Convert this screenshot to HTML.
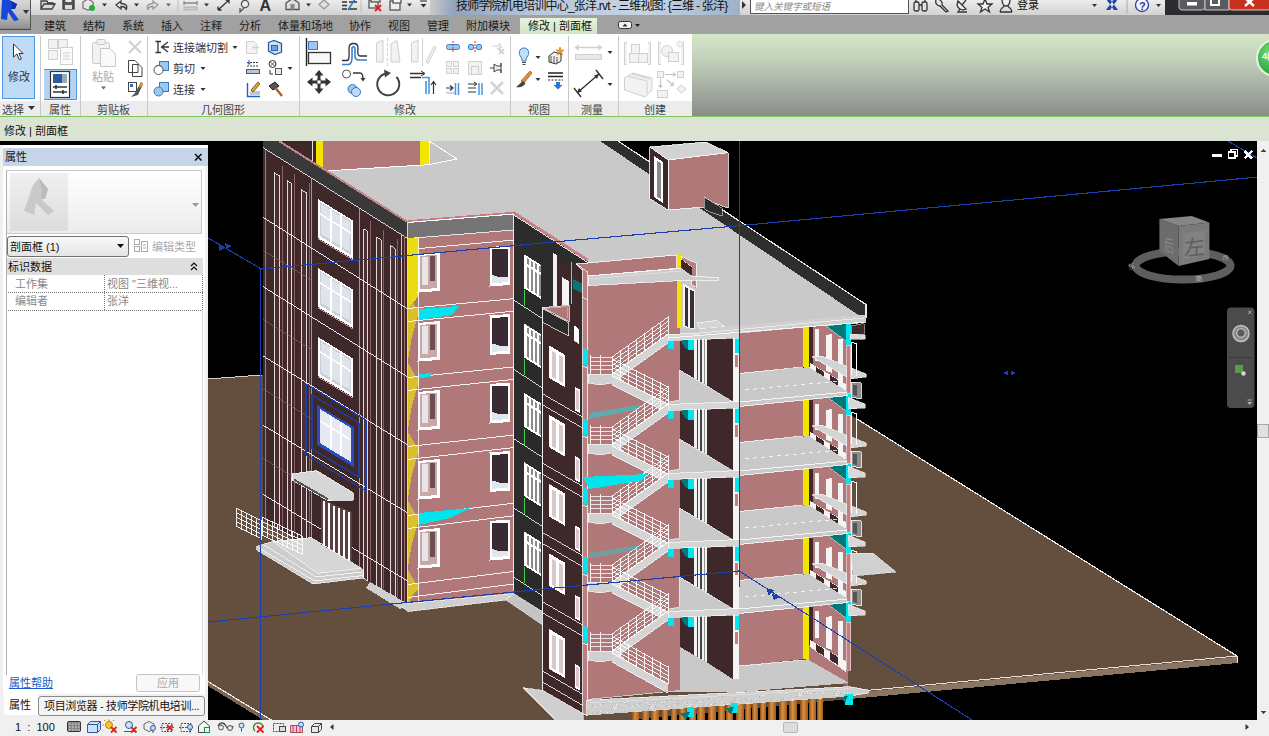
<!DOCTYPE html>
<html lang="zh-CN">
<head>
<meta charset="utf-8">
<title>Revit</title>
<style>
html,body{margin:0;padding:0;}
body{width:1269px;height:736px;overflow:hidden;position:relative;background:#000;font-family:"Liberation Sans","Noto Sans CJK SC",sans-serif;font-size:11px;color:#222;}
.abs{position:absolute;}
#title{left:0;top:0;width:1269px;height:15px;background:linear-gradient(#ececec,#d2d2d2);}
#titletext{left:430px;top:0;width:310px;height:15px;background:linear-gradient(90deg,#c9c9c9 0,#8fa3bd 8%,#b9c8da 35%,#c5d3e3 70%,#9fb2c9 100%);}
#titletext span{position:absolute;left:26px;top:-4px;font-size:12px;color:#111;white-space:nowrap;letter-spacing:-0.8px;}
#tabs{left:0;top:15px;width:1269px;height:18px;background:#a1a1a1;}
.tab{position:absolute;top:18.5px;font-size:11px;color:#1b1b1b;white-space:nowrap;line-height:14px;}
#ribbon{left:0;top:33px;width:1269px;height:84px;background:linear-gradient(#d2e6c8 0,#c3d2bb 30%,#a3aaa0 70%,#8b8d8a 100%);border-top:1px solid #84c35a;border-bottom:1px solid #84c35a;box-sizing:border-box;}
#panels{left:0;top:34px;width:692px;height:82px;background:#fff;}
#plabels{left:0;top:101px;width:692px;height:15px;background:#ececec;}
.plab{position:absolute;top:103px;font-size:11px;color:#444;white-space:nowrap;line-height:14px;}
.psep{position:absolute;top:36px;width:1px;height:80px;background:#c9c9c9;}
.rt{position:absolute;font-size:11px;color:#333;white-space:nowrap;line-height:14px;}
#optbar{left:0;top:117px;width:1269px;height:24px;background:#dbe3d3;}
#optbar span{position:absolute;left:4px;top:5px;font-size:11px;color:#111;}
#view{left:0;top:141px;width:1269px;height:579px;background:#000;overflow:hidden;}
#props{left:0;top:145px;width:208px;height:575px;background:#fff;}
#status{left:0;top:720px;width:1269px;height:16px;background:#f0f0f0;}
</style>
</head>
<body>
<div id="view" class="abs">
<svg id="scene" width="1269" height="579" viewBox="0 141 1269 579" style="position:absolute;left:0;top:0" shape-rendering="crispEdges">
<defs><linearGradient id="pile" x1="0" x2="1" y1="0" y2="0"><stop offset="0" stop-color="#8a4a18"/><stop offset="0.45" stop-color="#d89040"/><stop offset="1" stop-color="#a05a20"/></linearGradient><pattern id="speck" width="37" height="13" patternUnits="userSpaceOnUse"><rect width="37" height="13" fill="#cfcfcf"/><rect x="16" y="11" width="1" height="1" fill="#b8b8b8"/><rect x="33" y="0" width="1" height="1" fill="#efefef"/><rect x="15" y="10" width="1" height="1" fill="#f4f4f4"/><rect x="10" y="1" width="1" height="1" fill="#b8b8b8"/><rect x="30" y="3" width="1" height="1" fill="#efefef"/><rect x="34" y="1" width="1" height="1" fill="#aaa"/><rect x="0" y="11" width="1" height="1" fill="#aaa"/><rect x="26" y="4" width="1" height="1" fill="#aaa"/><rect x="24" y="2" width="1" height="1" fill="#f4f4f4"/><rect x="8" y="9" width="1" height="1" fill="#efefef"/><rect x="8" y="2" width="1" height="1" fill="#f4f4f4"/><rect x="0" y="3" width="1" height="1" fill="#aaa"/><rect x="10" y="2" width="1" height="1" fill="#b8b8b8"/><rect x="20" y="3" width="1" height="1" fill="#aaa"/><rect x="11" y="11" width="1" height="1" fill="#aaa"/><rect x="24" y="4" width="1" height="1" fill="#f4f4f4"/><rect x="23" y="6" width="1" height="1" fill="#aaa"/><rect x="9" y="4" width="1" height="1" fill="#f4f4f4"/><rect x="21" y="4" width="1" height="1" fill="#f4f4f4"/><rect x="21" y="1" width="1" height="1" fill="#b8b8b8"/><rect x="22" y="4" width="1" height="1" fill="#efefef"/><rect x="20" y="2" width="1" height="1" fill="#efefef"/><rect x="30" y="11" width="1" height="1" fill="#aaa"/><rect x="3" y="4" width="1" height="1" fill="#f4f4f4"/><rect x="22" y="6" width="1" height="1" fill="#f4f4f4"/><rect x="35" y="12" width="1" height="1" fill="#efefef"/><rect x="23" y="6" width="1" height="1" fill="#f4f4f4"/><rect x="28" y="0" width="1" height="1" fill="#aaa"/><rect x="12" y="1" width="1" height="1" fill="#aaa"/><rect x="29" y="5" width="1" height="1" fill="#b8b8b8"/><rect x="33" y="4" width="1" height="1" fill="#efefef"/><rect x="6" y="9" width="1" height="1" fill="#b8b8b8"/><rect x="18" y="0" width="1" height="1" fill="#efefef"/><rect x="5" y="3" width="1" height="1" fill="#b8b8b8"/><rect x="32" y="9" width="1" height="1" fill="#b8b8b8"/><rect x="9" y="5" width="1" height="1" fill="#b8b8b8"/><rect x="34" y="1" width="1" height="1" fill="#b8b8b8"/><rect x="20" y="4" width="1" height="1" fill="#aaa"/><rect x="5" y="10" width="1" height="1" fill="#aaa"/><rect x="19" y="7" width="1" height="1" fill="#aaa"/></pattern></defs>
<polygon points="208.0,379.0 731.0,340.0 1237.0,656.0 1237.0,663.0 850.0,699.0 330.0,748.7 273.0,721.0 208.0,681.5" fill="#644f3f"/>
<polyline points="208.0,379.0 262.0,375.0" fill="none" stroke="#d8d0c8" stroke-width="1"/>
<polyline points="857.0,419.0 1237.0,656.0 1237.0,663.0" fill="none" stroke="#f0ebe6" stroke-width="1.2"/>
<polyline points="1237.0,656.0 850.0,692.0" fill="none" stroke="#e8e0d8" stroke-width="1"/>
<polygon points="1237.0,657.0 1237.0,663.0 850.0,699.0 850.0,693.0" fill="#8a7462"/>
<polygon points="208.0,682.0 273.0,721.5 273.0,726.0 208.0,686.0" fill="#7a6452"/>
<polyline points="208.0,681.5 273.0,721.0" fill="none" stroke="#f0ebe6" stroke-width="1.2"/>
<polygon points="279.0,141.0 601.8,141.0 864.0,318.0 864.0,323.0 587.0,347.0 587.5,261.0 513.6,213.6 407.7,222.0" fill="#c9c9c9"/>
<polygon points="600.0,141.0 618.0,141.0 866.0,304.5 866.0,318.0 863.0,318.0" fill="#2e2e2e"/>
<polyline points="618.0,141.0 866.0,304.5 866.0,318.0" fill="none" stroke="#e8e8e8" stroke-width="1.2"/>
<polygon points="279.5,141.0 315.6,141.0 315.6,165.5" fill="#3f2829"/>
<polyline points="312.0,141.0 312.0,163.0" fill="none" stroke="#e8e0e0" stroke-width="1"/>
<polygon points="315.6,141.0 429.0,141.0 429.0,164.7 324.0,171.0" fill="#b07878"/>
<polygon points="315.6,141.0 323.0,141.0 323.0,170.5 315.6,165.5" fill="#f2e500"/>
<polygon points="420.0,141.0 429.0,141.0 429.0,164.7 420.0,165.2" fill="#f2e500"/>
<polygon points="429.0,141.0 457.0,159.0 429.0,164.7" fill="#c4c4c4" stroke="#fff" stroke-width="1"/>
<polyline points="324.0,171.0 429.0,164.7" fill="none" stroke="#fff" stroke-width="1"/>
<polyline points="324.0,171.0 408.0,223.0" fill="none" stroke="#c08a8a" stroke-width="2.5"/>
<polygon points="668.0,160.0 728.0,152.6 728.0,208.0 714.0,203.0 704.0,197.0 704.0,207.0 668.0,210.0" fill="#b07878" stroke="#fff" stroke-width="0.8"/>
<polygon points="649.7,147.0 706.0,142.0 728.0,152.6 668.0,160.0" fill="#d2d2d2" stroke="#fff" stroke-width="0.8"/>
<polygon points="649.7,147.0 668.0,160.0 668.0,210.0 649.7,198.5" fill="#3f2829" stroke="#fff" stroke-width="0.8"/>
<polygon points="654.0,156.0 663.0,162.0 663.0,203.0 654.0,197.0" fill="#fff"/>
<polygon points="656.5,160.0 660.5,163.0 660.5,199.0 656.5,196.0" fill="#8a8a8a"/>
<polygon points="704.0,197.0 722.0,208.0 722.0,216.0 706.4,210.6 704.0,207.0" fill="#2c2c2c" stroke="#ddd" stroke-width="0.6"/>
<polygon points="263.0,147.6 407.7,238.5 407.7,604.0 263.0,520.0" fill="#3f2829"/>
<polygon points="263.0,141.0 279.0,141.0 407.7,222.0 407.7,238.5 263.0,147.6" fill="#393939"/>
<polyline points="279.0,141.0 407.7,222.0" fill="none" stroke="#c4848a" stroke-width="2"/>
<polyline points="263.0,147.6 407.7,238.5" fill="none" stroke="#fff" stroke-width="0.8"/>
<polygon points="274.0,172.5 279.5,176.0 279.5,529.6 274.0,526.4" fill="#4a3032" stroke="#f4ecec" stroke-width="0.9"/>
<polyline points="282.0,166.0 282.0,529.6" fill="none" stroke="#946466" stroke-width="0.9"/>
<polygon points="287.0,180.7 291.7,183.6 291.7,536.7 287.0,533.9" fill="#4a3032" stroke="#f4ecec" stroke-width="0.9"/>
<polyline points="294.2,173.6 294.2,536.7" fill="none" stroke="#946466" stroke-width="0.9"/>
<polygon points="301.2,189.6 306.6,193.0 306.6,545.3 301.2,542.2" fill="#4a3032" stroke="#f4ecec" stroke-width="0.9"/>
<polyline points="309.1,183.0 309.1,545.3" fill="none" stroke="#946466" stroke-width="0.9"/>
<polygon points="363.7,228.9 367.8,231.4 367.8,580.8 363.7,578.5" fill="#4a3032" stroke="#f4ecec" stroke-width="0.9"/>
<polyline points="370.3,221.4 370.3,580.8" fill="none" stroke="#946466" stroke-width="0.9"/>
<polygon points="376.7,237.0 381.4,240.0 381.4,588.7 376.7,586.0" fill="#4a3032" stroke="#f4ecec" stroke-width="0.9"/>
<polyline points="383.9,230.0 383.9,588.7" fill="none" stroke="#946466" stroke-width="0.9"/>
<polygon points="390.3,245.6 395.0,248.5 395.0,596.6 390.3,593.9" fill="#4a3032" stroke="#f4ecec" stroke-width="0.9"/>
<polyline points="397.5,238.5 397.5,596.6" fill="none" stroke="#946466" stroke-width="0.9"/>
<polyline points="265.5,150.0 265.5,521.0" fill="none" stroke="#b07878" stroke-width="1"/>
<polyline points="401.0,234.3 401.0,600.1" fill="none" stroke="#f0e8e8" stroke-width="0.8"/>
<polyline points="404.0,236.2 404.0,601.9" fill="none" stroke="#b07878" stroke-width="0.9"/>
<polyline points="311.0,177.8 311.0,547.9" fill="none" stroke="#d0c4c4" stroke-width="0.7"/>
<polyline points="359.0,207.9 359.0,575.7" fill="none" stroke="#d0c4c4" stroke-width="0.7"/>
<polyline points="263.2,217.4 407.0,308.5" fill="none" stroke="#fff" stroke-width="0.9"/>
<polyline points="263.2,250.4 312.0,280.4" fill="none" stroke="#8a7070" stroke-width="0.6"/>
<polyline points="263.2,286.7 407.0,376.5" fill="none" stroke="#fff" stroke-width="0.9"/>
<polyline points="263.2,319.7 312.0,349.7" fill="none" stroke="#8a7070" stroke-width="0.6"/>
<polyline points="263.2,356.0 407.0,444.5" fill="none" stroke="#fff" stroke-width="0.9"/>
<polyline points="263.2,389.0 312.0,419.0" fill="none" stroke="#8a7070" stroke-width="0.6"/>
<polyline points="263.2,425.3 407.0,512.5" fill="none" stroke="#fff" stroke-width="0.9"/>
<polyline points="263.2,458.3 312.0,488.3" fill="none" stroke="#8a7070" stroke-width="0.6"/>
<polyline points="263.2,494.6 407.0,580.5" fill="none" stroke="#fff" stroke-width="0.9"/>
<polyline points="263.2,527.6 312.0,557.6" fill="none" stroke="#8a7070" stroke-width="0.6"/>
<polygon points="318.0,199.0 353.0,220.5 353.0,259.0 318.0,238.0" fill="#fff"/>
<polygon points="320.0,202.0 351.0,221.0 351.0,255.0 320.0,236.0" fill="#c9cdd6"/>
<polygon points="321.0,204.0 350.0,222.0 350.0,252.0 321.0,234.0" fill="#dfe3ea"/>
<polyline points="331.0,209.0 331.0,243.0" fill="none" stroke="#fff" stroke-width="2"/>
<polyline points="341.0,215.0 341.0,249.0" fill="none" stroke="#fff" stroke-width="2"/>
<polyline points="320.0,214.0 351.0,233.0" fill="none" stroke="#fff" stroke-width="1.6"/>
<polyline points="318.0,239.0 353.0,260.0" fill="none" stroke="#c48c8c" stroke-width="1"/>
<polygon points="318.0,268.0 353.0,289.5 353.0,328.0 318.0,307.0" fill="#fff"/>
<polygon points="320.0,271.0 351.0,290.0 351.0,324.0 320.0,305.0" fill="#c9cdd6"/>
<polygon points="321.0,273.0 350.0,291.0 350.0,321.0 321.0,303.0" fill="#dfe3ea"/>
<polyline points="331.0,278.0 331.0,312.0" fill="none" stroke="#fff" stroke-width="2"/>
<polyline points="341.0,284.0 341.0,318.0" fill="none" stroke="#fff" stroke-width="2"/>
<polyline points="320.0,283.0 351.0,302.0" fill="none" stroke="#fff" stroke-width="1.6"/>
<polyline points="318.0,308.0 353.0,329.0" fill="none" stroke="#c48c8c" stroke-width="1"/>
<polygon points="318.0,337.0 353.0,358.5 353.0,397.0 318.0,376.0" fill="#fff"/>
<polygon points="320.0,340.0 351.0,359.0 351.0,393.0 320.0,374.0" fill="#c9cdd6"/>
<polygon points="321.0,342.0 350.0,360.0 350.0,390.0 321.0,372.0" fill="#dfe3ea"/>
<polyline points="331.0,347.0 331.0,381.0" fill="none" stroke="#fff" stroke-width="2"/>
<polyline points="341.0,353.0 341.0,387.0" fill="none" stroke="#fff" stroke-width="2"/>
<polyline points="320.0,352.0 351.0,371.0" fill="none" stroke="#fff" stroke-width="1.6"/>
<polyline points="318.0,377.0 353.0,398.0" fill="none" stroke="#c48c8c" stroke-width="1"/>
<polygon points="306.0,384.0 366.0,420.0 366.0,491.0 306.0,455.0" fill="none" stroke="#1c3fb0" stroke-width="1.2"/>
<polygon points="312.0,395.0 359.0,423.0 359.0,477.0 312.0,449.0" fill="none" stroke="#1c3fb0" stroke-width="1.2"/>
<polygon points="317.0,405.0 354.0,427.0 354.0,467.0 317.0,445.0" fill="#2a4cc0"/>
<polygon points="320.0,409.0 351.0,428.0 351.0,462.0 320.0,443.0" fill="#e6e9f2"/>
<polyline points="331.0,416.0 331.0,450.0" fill="none" stroke="#fff" stroke-width="2"/>
<polyline points="341.0,422.0 341.0,456.0" fill="none" stroke="#fff" stroke-width="2"/>
<polyline points="320.0,421.0 351.0,440.0" fill="none" stroke="#fff" stroke-width="1.6"/>
<polygon points="407.7,238.5 513.6,230.0 513.6,594.0 407.7,604.0" fill="#b07878"/>
<polygon points="407.7,222.0 513.6,213.6 513.6,230.0 407.7,238.5" fill="#757575"/>
<polyline points="407.7,221.0 513.6,212.6" fill="none" stroke="#c87880" stroke-width="1.5"/>
<polyline points="407.7,222.5 513.6,214.1" fill="none" stroke="#fff" stroke-width="1"/>
<polyline points="407.7,238.5 513.6,230.0" fill="none" stroke="#fff" stroke-width="0.8"/>
<polyline points="407.7,222.0 407.7,604.0" fill="none" stroke="#fff" stroke-width="0.8"/>
<polyline points="513.6,213.6 513.6,594.0" fill="none" stroke="#fff" stroke-width="0.8"/>
<polygon points="408.4,238.5 418.5,237.7 418.5,603.0 408.4,604.0" fill="#b07878"/>
<polygon points="408.4,238.5 418.5,237.7 418.5,296.0 408.4,308.0" fill="#ecdc10"/>
<polygon points="408.4,308.5 418.5,307.7 418.5,313.5 412.0,336.4 408.4,358.1" fill="#e6d21c" opacity="0.8"/>
<polygon points="408.4,294.5 416.0,307.5 408.4,308.5" fill="#e6d21c" opacity="0.7"/>
<polygon points="408.4,377.5 418.5,376.7 418.5,382.5 412.0,405.4 408.4,427.1" fill="#e6d21c" opacity="0.8"/>
<polygon points="408.4,363.5 416.0,376.5 408.4,377.5" fill="#e6d21c" opacity="0.7"/>
<polygon points="408.4,446.5 418.5,445.7 418.5,451.5 412.0,474.4 408.4,496.1" fill="#e6d21c" opacity="0.8"/>
<polygon points="408.4,432.5 416.0,445.5 408.4,446.5" fill="#e6d21c" opacity="0.7"/>
<polygon points="408.4,515.5 418.5,514.7 418.5,520.5 412.0,543.4 408.4,565.1" fill="#e6d21c" opacity="0.8"/>
<polygon points="408.4,501.5 416.0,514.5 408.4,515.5" fill="#e6d21c" opacity="0.7"/>
<polygon points="408.4,584.5 418.5,583.7 418.5,589.5 412.0,595.8 408.4,604.5" fill="#e6d21c" opacity="0.8"/>
<polygon points="408.4,570.5 416.0,583.5 408.4,584.5" fill="#e6d21c" opacity="0.7"/>
<polyline points="418.5,237.7 418.5,603.0" fill="none" stroke="#fff" stroke-width="0.8"/>
<polyline points="407.7,308.5 513.6,298.7" fill="none" stroke="#fff" stroke-width="0.9"/>
<polyline points="407.7,321.5 513.6,311.2" fill="none" stroke="#fff" stroke-width="0.9"/>
<polyline points="407.7,377.5 513.6,366.9" fill="none" stroke="#fff" stroke-width="0.9"/>
<polyline points="407.7,390.5 513.6,379.4" fill="none" stroke="#fff" stroke-width="0.9"/>
<polyline points="407.7,446.5 513.6,435.1" fill="none" stroke="#fff" stroke-width="0.9"/>
<polyline points="407.7,459.5 513.6,447.6" fill="none" stroke="#fff" stroke-width="0.9"/>
<polyline points="407.7,515.5 513.6,503.3" fill="none" stroke="#fff" stroke-width="0.9"/>
<polyline points="407.7,528.5 513.6,515.8" fill="none" stroke="#fff" stroke-width="0.9"/>
<polyline points="407.7,584.5 513.6,571.5" fill="none" stroke="#fff" stroke-width="0.9"/>
<polyline points="407.7,597.5 513.6,584.0" fill="none" stroke="#fff" stroke-width="0.9"/>
<polyline points="418.5,248.5 513.6,240.0" fill="none" stroke="#fff" stroke-width="0.9"/>
<polygon points="419.0,309.0 459.0,306.0 452.0,315.0 419.0,320.0" fill="#00e5ee"/>
<polygon points="419.0,513.0 470.0,508.0 450.0,518.0 419.0,525.0" fill="#00e5ee"/>
<polygon points="419.0,374.0 432.0,373.0 430.0,377.0 419.0,378.0" fill="#00e5ee"/>
<polygon points="417.5,254.0 439.5,252.0 439.5,291.0 417.5,292.5" fill="#fff"/>
<polygon points="420.0,256.0 437.0,254.5 437.0,288.0 420.0,289.5" fill="#c9a8a8"/>
<polygon points="422.0,257.0 428.0,256.5 428.0,285.0 422.0,285.5" fill="#e8e4e8"/>
<polygon points="430.0,256.3 435.0,256.0 435.0,281.0 430.0,281.5" fill="#6a5054"/>
<polygon points="489.5,247.0 510.0,245.5 510.0,285.0 489.5,286.5" fill="#fff"/>
<polygon points="492.0,249.5 507.5,248.5 507.5,281.0 492.0,282.5" fill="#3a2a34"/>
<polygon points="492.0,275.0 499.0,277.0 507.5,277.0 507.5,282.0 492.0,283.5" fill="#dfe6ee"/>
<polygon points="417.5,323.0 439.5,321.0 439.5,360.0 417.5,361.5" fill="#fff"/>
<polygon points="420.0,325.0 437.0,323.5 437.0,357.0 420.0,358.5" fill="#c9a8a8"/>
<polygon points="422.0,326.0 428.0,325.5 428.0,354.0 422.0,354.5" fill="#e8e4e8"/>
<polygon points="430.0,325.3 435.0,325.0 435.0,350.0 430.0,350.5" fill="#6a5054"/>
<polygon points="489.5,315.5 510.0,314.0 510.0,353.5 489.5,355.0" fill="#fff"/>
<polygon points="492.0,318.0 507.5,317.0 507.5,349.5 492.0,351.0" fill="#3a2a34"/>
<polygon points="492.0,343.5 499.0,345.5 507.5,345.5 507.5,350.5 492.0,352.0" fill="#dfe6ee"/>
<polygon points="417.5,392.0 439.5,390.0 439.5,429.0 417.5,430.5" fill="#fff"/>
<polygon points="420.0,394.0 437.0,392.5 437.0,426.0 420.0,427.5" fill="#c9a8a8"/>
<polygon points="422.0,395.0 428.0,394.5 428.0,423.0 422.0,423.5" fill="#e8e4e8"/>
<polygon points="430.0,394.3 435.0,394.0 435.0,419.0 430.0,419.5" fill="#6a5054"/>
<polygon points="489.5,384.0 510.0,382.5 510.0,422.0 489.5,423.5" fill="#fff"/>
<polygon points="492.0,386.5 507.5,385.5 507.5,418.0 492.0,419.5" fill="#3a2a34"/>
<polygon points="492.0,412.0 499.0,414.0 507.5,414.0 507.5,419.0 492.0,420.5" fill="#dfe6ee"/>
<polygon points="417.5,461.0 439.5,459.0 439.5,498.0 417.5,499.5" fill="#fff"/>
<polygon points="420.0,463.0 437.0,461.5 437.0,495.0 420.0,496.5" fill="#c9a8a8"/>
<polygon points="422.0,464.0 428.0,463.5 428.0,492.0 422.0,492.5" fill="#e8e4e8"/>
<polygon points="430.0,463.3 435.0,463.0 435.0,488.0 430.0,488.5" fill="#6a5054"/>
<polygon points="489.5,452.5 510.0,451.0 510.0,490.5 489.5,492.0" fill="#fff"/>
<polygon points="492.0,455.0 507.5,454.0 507.5,486.5 492.0,488.0" fill="#3a2a34"/>
<polygon points="492.0,480.5 499.0,482.5 507.5,482.5 507.5,487.5 492.0,489.0" fill="#dfe6ee"/>
<polygon points="417.5,530.0 439.5,528.0 439.5,567.0 417.5,568.5" fill="#fff"/>
<polygon points="420.0,532.0 437.0,530.5 437.0,564.0 420.0,565.5" fill="#c9a8a8"/>
<polygon points="422.0,533.0 428.0,532.5 428.0,561.0 422.0,561.5" fill="#e8e4e8"/>
<polygon points="430.0,532.3 435.0,532.0 435.0,557.0 430.0,557.5" fill="#6a5054"/>
<polygon points="489.5,521.0 510.0,519.5 510.0,559.0 489.5,560.5" fill="#fff"/>
<polygon points="492.0,523.5 507.5,522.5 507.5,555.0 492.0,556.5" fill="#3a2a34"/>
<polygon points="492.0,549.0 499.0,551.0 507.5,551.0 507.5,556.0 492.0,557.5" fill="#dfe6ee"/>
<polygon points="513.6,213.6 587.5,261.0 587.5,320.0 541.5,320.0 541.5,611.6 513.6,594.0" fill="#2c2c2c"/>
<polyline points="513.6,212.6 587.5,260.0" fill="none" stroke="#c4848a" stroke-width="3"/>
<polyline points="513.6,215.0 587.5,262.4" fill="none" stroke="#fff" stroke-width="0.9"/>
<polygon points="523.6,254.0 541.3,265.0 541.3,299.0 523.6,288.0" fill="#fff"/>
<polygon points="526.5,257.8 528.5,259.0 528.5,264.8 526.5,263.6" fill="#8a8a8a"/>
<polygon points="526.5,266.3 528.5,267.5 528.5,288.8 526.5,287.6" fill="#8a8a8a"/>
<polygon points="530.5,260.3 532.5,261.5 532.5,267.3 530.5,266.1" fill="#8a8a8a"/>
<polygon points="530.5,268.8 532.5,270.0 532.5,291.3 530.5,290.1" fill="#8a8a8a"/>
<polygon points="534.5,262.8 536.5,264.0 536.5,269.8 534.5,268.6" fill="#8a8a8a"/>
<polygon points="534.5,271.3 536.5,272.5 536.5,293.8 534.5,292.6" fill="#8a8a8a"/>
<polygon points="538.5,265.2 540.5,266.4 540.5,272.2 538.5,271.0" fill="#8a8a8a"/>
<polygon points="538.5,273.7 540.5,274.9 540.5,296.2 538.5,295.0" fill="#8a8a8a"/>
<polygon points="523.6,289.0 541.3,300.0 541.3,316.0 523.6,305.0" fill="#2a2a2a"/>
<polyline points="524.5,290.0 524.5,306.0" fill="none" stroke="#40d040" stroke-width="1.3"/>
<polyline points="513.6,300.0 541.5,318.0" fill="none" stroke="#fff" stroke-width="0.8"/>
<polygon points="523.6,323.3 541.3,334.3 541.3,368.3 523.6,357.3" fill="#fff"/>
<polygon points="526.5,327.1 528.5,328.3 528.5,334.1 526.5,332.9" fill="#8a8a8a"/>
<polygon points="526.5,335.6 528.5,336.8 528.5,358.1 526.5,356.9" fill="#8a8a8a"/>
<polygon points="530.5,329.6 532.5,330.8 532.5,336.6 530.5,335.4" fill="#8a8a8a"/>
<polygon points="530.5,338.1 532.5,339.3 532.5,360.6 530.5,359.4" fill="#8a8a8a"/>
<polygon points="534.5,332.1 536.5,333.3 536.5,339.1 534.5,337.9" fill="#8a8a8a"/>
<polygon points="534.5,340.6 536.5,341.8 536.5,363.1 534.5,361.9" fill="#8a8a8a"/>
<polygon points="538.5,334.5 540.5,335.7 540.5,341.5 538.5,340.3" fill="#8a8a8a"/>
<polygon points="538.5,343.0 540.5,344.2 540.5,365.5 538.5,364.3" fill="#8a8a8a"/>
<polygon points="523.6,358.3 541.3,369.3 541.3,385.3 523.6,374.3" fill="#2a2a2a"/>
<polyline points="524.5,359.3 524.5,375.3" fill="none" stroke="#40d040" stroke-width="1.3"/>
<polyline points="513.6,369.3 541.5,387.3" fill="none" stroke="#fff" stroke-width="0.8"/>
<polygon points="523.6,392.6 541.3,403.6 541.3,437.6 523.6,426.6" fill="#fff"/>
<polygon points="526.5,396.4 528.5,397.6 528.5,403.4 526.5,402.2" fill="#8a8a8a"/>
<polygon points="526.5,404.9 528.5,406.1 528.5,427.4 526.5,426.2" fill="#8a8a8a"/>
<polygon points="530.5,398.9 532.5,400.1 532.5,405.9 530.5,404.7" fill="#8a8a8a"/>
<polygon points="530.5,407.4 532.5,408.6 532.5,429.9 530.5,428.7" fill="#8a8a8a"/>
<polygon points="534.5,401.4 536.5,402.6 536.5,408.4 534.5,407.2" fill="#8a8a8a"/>
<polygon points="534.5,409.9 536.5,411.1 536.5,432.4 534.5,431.2" fill="#8a8a8a"/>
<polygon points="538.5,403.8 540.5,405.0 540.5,410.8 538.5,409.6" fill="#8a8a8a"/>
<polygon points="538.5,412.3 540.5,413.5 540.5,434.8 538.5,433.6" fill="#8a8a8a"/>
<polygon points="523.6,427.6 541.3,438.6 541.3,454.6 523.6,443.6" fill="#2a2a2a"/>
<polyline points="524.5,428.6 524.5,444.6" fill="none" stroke="#40d040" stroke-width="1.3"/>
<polyline points="513.6,438.6 541.5,456.6" fill="none" stroke="#fff" stroke-width="0.8"/>
<polygon points="523.6,461.9 541.3,472.9 541.3,506.9 523.6,495.9" fill="#fff"/>
<polygon points="526.5,465.7 528.5,466.9 528.5,472.7 526.5,471.5" fill="#8a8a8a"/>
<polygon points="526.5,474.2 528.5,475.4 528.5,496.7 526.5,495.5" fill="#8a8a8a"/>
<polygon points="530.5,468.2 532.5,469.4 532.5,475.2 530.5,474.0" fill="#8a8a8a"/>
<polygon points="530.5,476.7 532.5,477.9 532.5,499.2 530.5,498.0" fill="#8a8a8a"/>
<polygon points="534.5,470.7 536.5,471.9 536.5,477.7 534.5,476.5" fill="#8a8a8a"/>
<polygon points="534.5,479.2 536.5,480.4 536.5,501.7 534.5,500.5" fill="#8a8a8a"/>
<polygon points="538.5,473.1 540.5,474.3 540.5,480.1 538.5,478.9" fill="#8a8a8a"/>
<polygon points="538.5,481.6 540.5,482.8 540.5,504.1 538.5,502.9" fill="#8a8a8a"/>
<polygon points="523.6,496.9 541.3,507.9 541.3,523.9 523.6,512.9" fill="#2a2a2a"/>
<polyline points="524.5,497.9 524.5,513.9" fill="none" stroke="#40d040" stroke-width="1.3"/>
<polyline points="513.6,507.9 541.5,525.9" fill="none" stroke="#fff" stroke-width="0.8"/>
<polygon points="523.6,531.2 541.3,542.2 541.3,576.2 523.6,565.2" fill="#fff"/>
<polygon points="526.5,535.0 528.5,536.2 528.5,542.0 526.5,540.8" fill="#8a8a8a"/>
<polygon points="526.5,543.5 528.5,544.7 528.5,566.0 526.5,564.8" fill="#8a8a8a"/>
<polygon points="530.5,537.5 532.5,538.7 532.5,544.5 530.5,543.3" fill="#8a8a8a"/>
<polygon points="530.5,546.0 532.5,547.2 532.5,568.5 530.5,567.3" fill="#8a8a8a"/>
<polygon points="534.5,540.0 536.5,541.2 536.5,547.0 534.5,545.8" fill="#8a8a8a"/>
<polygon points="534.5,548.5 536.5,549.7 536.5,571.0 534.5,569.8" fill="#8a8a8a"/>
<polygon points="538.5,542.4 540.5,543.6 540.5,549.4 538.5,548.2" fill="#8a8a8a"/>
<polygon points="538.5,550.9 540.5,552.1 540.5,573.4 538.5,572.2" fill="#8a8a8a"/>
<polygon points="523.6,566.2 541.3,577.2 541.3,593.2 523.6,582.2" fill="#2a2a2a"/>
<polyline points="524.5,567.2 524.5,583.2" fill="none" stroke="#40d040" stroke-width="1.3"/>
<polyline points="513.6,577.2 541.5,595.2" fill="none" stroke="#fff" stroke-width="0.8"/>
<polygon points="553.0,253.0 556.5,255.0 556.5,306.0 553.0,306.5" fill="#f0f0f0"/>
<polygon points="556.5,258.0 570.0,266.5 570.0,305.0 556.5,306.0" fill="#3f2829"/>
<polygon points="562.0,277.0 568.5,281.0 568.5,305.0 562.0,305.5" fill="#f4f4f4"/>
<polyline points="571.0,262.0 571.0,304.0" fill="none" stroke="#c8c060" stroke-width="1"/>
<polygon points="542.5,307.3 569.2,305.4 583.0,318.0 583.0,713.0 542.5,690.0" fill="#3f2829"/>
<polygon points="542.2,308.6 568.8,322.7 568.8,336.0 542.2,322.2" fill="#2c2c2c" stroke="#fff" stroke-width="0.7"/>
<polygon points="542.2,307.5 569.2,305.4 569.2,321.7" fill="#b07878" stroke="#fff" stroke-width="0.7"/>
<polyline points="545.0,308.3 567.0,306.6 567.0,318.0" fill="none" stroke="#d8a8a8" stroke-width="0.8"/>
<polyline points="542.5,307.3 542.5,690.0" fill="none" stroke="#fff" stroke-width="0.9"/>
<polygon points="549.0,345.4 565.2,355.0 565.2,387.4 549.0,377.9" fill="#fff"/>
<polygon points="551.5,350.4 556.0,353.1 556.0,379.4 551.5,376.7" fill="#d8c8cc"/>
<polygon points="558.5,354.4 563.0,357.1 563.0,383.4 558.5,380.7" fill="#d8c8cc"/>
<polyline points="542.5,394.4 583.0,417.9" fill="none" stroke="#fff" stroke-width="0.8"/>
<polyline points="542.5,405.4 583.0,428.9" fill="none" stroke="#fff" stroke-width="0.8"/>
<polygon points="574.5,386.4 580.0,389.7 580.0,413.4 574.5,410.1" fill="#fff"/>
<polygon points="576.0,389.4 578.5,390.9 578.5,410.4 576.0,408.9" fill="#d8c8cc"/>
<polygon points="549.0,414.7 565.2,424.3 565.2,456.7 549.0,447.2" fill="#fff"/>
<polygon points="551.5,419.7 556.0,422.4 556.0,448.7 551.5,446.0" fill="#d8c8cc"/>
<polygon points="558.5,423.7 563.0,426.4 563.0,452.7 558.5,450.0" fill="#d8c8cc"/>
<polyline points="542.5,463.7 583.0,487.2" fill="none" stroke="#fff" stroke-width="0.8"/>
<polyline points="542.5,474.7 583.0,498.2" fill="none" stroke="#fff" stroke-width="0.8"/>
<polygon points="574.5,455.7 580.0,459.0 580.0,482.7 574.5,479.4" fill="#fff"/>
<polygon points="576.0,458.7 578.5,460.2 578.5,479.7 576.0,478.2" fill="#d8c8cc"/>
<polygon points="549.0,484.0 565.2,493.6 565.2,526.0 549.0,516.5" fill="#fff"/>
<polygon points="551.5,489.0 556.0,491.7 556.0,518.0 551.5,515.3" fill="#d8c8cc"/>
<polygon points="558.5,493.0 563.0,495.7 563.0,522.0 558.5,519.3" fill="#d8c8cc"/>
<polyline points="542.5,533.0 583.0,556.5" fill="none" stroke="#fff" stroke-width="0.8"/>
<polyline points="542.5,544.0 583.0,567.5" fill="none" stroke="#fff" stroke-width="0.8"/>
<polygon points="574.5,525.0 580.0,528.3 580.0,552.0 574.5,548.7" fill="#fff"/>
<polygon points="576.0,528.0 578.5,529.5 578.5,549.0 576.0,547.5" fill="#d8c8cc"/>
<polygon points="549.0,553.3 565.2,562.9 565.2,595.3 549.0,585.8" fill="#fff"/>
<polygon points="551.5,558.3 556.0,561.0 556.0,587.3 551.5,584.6" fill="#d8c8cc"/>
<polygon points="558.5,562.3 563.0,565.0 563.0,591.3 558.5,588.6" fill="#d8c8cc"/>
<polyline points="542.5,602.3 583.0,625.8" fill="none" stroke="#fff" stroke-width="0.8"/>
<polyline points="542.5,613.3 583.0,636.8" fill="none" stroke="#fff" stroke-width="0.8"/>
<polygon points="574.5,594.3 580.0,597.6 580.0,621.3 574.5,618.0" fill="#fff"/>
<polygon points="576.0,597.3 578.5,598.8 578.5,618.3 576.0,616.8" fill="#d8c8cc"/>
<polygon points="549.0,629.0 565.2,638.5 565.2,678.0 549.0,669.0" fill="#fff"/>
<polygon points="551.5,634.0 556.0,636.7 556.0,670.0 551.5,667.3" fill="#d8c8cc"/>
<polygon points="558.5,638.0 563.0,640.7 563.0,674.0 558.5,671.3" fill="#d8c8cc"/>
<polyline points="542.5,671.6 583.0,695.1" fill="none" stroke="#fff" stroke-width="0.8"/>
<polyline points="542.5,682.6 583.0,706.1" fill="none" stroke="#fff" stroke-width="0.8"/>
<polygon points="574.5,663.6 580.0,666.9 580.0,690.6 574.5,687.3" fill="#fff"/>
<polygon points="576.0,666.6 578.5,668.1 578.5,687.6 576.0,686.1" fill="#d8c8cc"/>
<polyline points="542.5,740.9 583.0,764.4" fill="none" stroke="#fff" stroke-width="0.8"/>
<polyline points="542.5,751.9 583.0,775.4" fill="none" stroke="#fff" stroke-width="0.8"/>
<polygon points="574.0,317.0 579.3,319.6 579.3,344.0 574.0,341.0" fill="#fff"/>
<polygon points="587.0,277.0 680.0,268.0 680.0,690.0 587.0,700.0" fill="#b07878"/>
<polygon points="680.0,268.0 740.0,300.0 740.0,692.0 680.0,690.0" fill="#c9c9c9"/>
<polygon points="582.8,268.0 587.0,266.0 587.0,716.0 582.8,713.0" fill="#b88080" stroke="#fff" stroke-width="0.8"/>
<polygon points="572.7,262.0 576.4,264.0 582.4,268.0 582.4,332.0 572.7,324.0" fill="#3f2829"/>
<polygon points="576.4,264.0 676.6,255.0 676.6,268.4 587.7,276.0" fill="#b07878" stroke="#fff" stroke-width="0.8"/>
<polygon points="576.4,264.0 587.7,272.0 587.7,300.0 582.4,297.0 582.4,268.0" fill="#b88080" stroke="#fff" stroke-width="0.7"/>
<polygon points="681.0,256.4 696.0,263.0 696.0,288.0 691.5,285.0 691.5,267.0 681.0,259.5" fill="#b88080" stroke="#fff" stroke-width="0.7"/>
<polygon points="681.0,259.4 691.5,267.0 691.5,276.0 681.0,268.4" fill="#3f2829"/>
<polygon points="677.0,254.0 681.0,254.3 681.0,327.5 677.0,327.5" fill="#f2e500"/>
<polygon points="588.4,276.0 681.0,268.4 691.5,276.0 718.5,278.0 718.5,280.3 691.5,280.0 588.4,285.6" fill="#cdcdcd" stroke="#fff" stroke-width="0.7"/>
<polyline points="588.4,279.0 681.0,271.0" fill="none" stroke="#e8e8e8" stroke-width="0.6"/>
<polygon points="572.7,279.0 582.4,283.5 582.4,293.0 572.7,288.5" fill="#007a78"/>
<polygon points="680.0,339.0 694.0,338.0 694.0,378.0 680.0,370.0" fill="#3f2829"/>
<polygon points="694.0,338.0 706.5,337.5 706.5,385.0 694.0,378.0" fill="#f2f2f2"/>
<polyline points="697.0,339.0 697.0,380.0" fill="none" stroke="#444" stroke-width="1"/>
<polyline points="701.0,339.0 701.0,382.0" fill="none" stroke="#444" stroke-width="1.2"/>
<polyline points="704.5,339.0 704.5,384.0" fill="none" stroke="#777" stroke-width="0.8"/>
<polygon points="706.5,338.7 732.6,336.6 732.6,402.0 706.5,385.0" fill="#3f2829"/>
<polygon points="732.6,336.6 739.4,336.0 739.4,402.0 732.6,402.0" fill="#f4f4f4"/>
<polygon points="735.0,355.0 738.0,355.0 738.0,367.0 735.0,367.0" fill="#c08080"/>
<polygon points="735.0,337.0 739.0,337.0 739.0,353.0 735.0,353.0" fill="#00e5ee"/>
<polygon points="679.4,370.0 733.6,402.0 740.0,402.0 740.0,406.0 668.0,409.0 668.0,402.0 679.4,400.0" fill="#c9c9c9" stroke="#fff" stroke-width="0.5"/>
<polygon points="668.0,340.0 673.5,339.5 673.5,349.0 668.0,349.0" fill="#00e5ee"/>
<polygon points="679.0,338.0 692.0,337.0 692.0,349.0 686.0,349.0" fill="#007a78"/>
<polygon points="688.0,337.0 694.0,337.0 694.0,350.0 688.0,350.0" fill="#00e5ee"/>
<polygon points="680.0,409.0 694.0,408.0 694.0,447.0 680.0,439.0" fill="#3f2829"/>
<polygon points="694.0,408.0 706.5,407.5 706.5,454.0 694.0,447.0" fill="#f2f2f2"/>
<polyline points="697.0,409.0 697.0,449.0" fill="none" stroke="#444" stroke-width="1"/>
<polyline points="701.0,409.0 701.0,451.0" fill="none" stroke="#444" stroke-width="1.2"/>
<polyline points="704.5,409.0 704.5,453.0" fill="none" stroke="#777" stroke-width="0.8"/>
<polygon points="706.5,408.7 732.6,406.6 732.6,471.0 706.5,454.0" fill="#3f2829"/>
<polygon points="732.6,406.6 739.4,406.0 739.4,471.0 732.6,471.0" fill="#f4f4f4"/>
<polygon points="735.0,425.0 738.0,425.0 738.0,437.0 735.0,437.0" fill="#c08080"/>
<polygon points="735.0,407.0 739.0,407.0 739.0,423.0 735.0,423.0" fill="#00e5ee"/>
<polygon points="679.4,439.0 733.6,471.0 740.0,471.0 740.0,475.0 668.0,478.0 668.0,471.0 679.4,469.0" fill="#c9c9c9" stroke="#fff" stroke-width="0.5"/>
<polygon points="668.0,410.0 673.5,409.5 673.5,419.0 668.0,419.0" fill="#00e5ee"/>
<polygon points="679.0,408.0 692.0,407.0 692.0,419.0 686.0,419.0" fill="#007a78"/>
<polygon points="688.0,407.0 694.0,407.0 694.0,420.0 688.0,420.0" fill="#00e5ee"/>
<polygon points="680.0,478.0 694.0,477.0 694.0,516.0 680.0,508.0" fill="#3f2829"/>
<polygon points="694.0,477.0 706.5,476.5 706.5,523.0 694.0,516.0" fill="#f2f2f2"/>
<polyline points="697.0,478.0 697.0,518.0" fill="none" stroke="#444" stroke-width="1"/>
<polyline points="701.0,478.0 701.0,520.0" fill="none" stroke="#444" stroke-width="1.2"/>
<polyline points="704.5,478.0 704.5,522.0" fill="none" stroke="#777" stroke-width="0.8"/>
<polygon points="706.5,477.7 732.6,475.6 732.6,540.0 706.5,523.0" fill="#3f2829"/>
<polygon points="732.6,475.6 739.4,475.0 739.4,540.0 732.6,540.0" fill="#f4f4f4"/>
<polygon points="735.0,494.0 738.0,494.0 738.0,506.0 735.0,506.0" fill="#c08080"/>
<polygon points="735.0,476.0 739.0,476.0 739.0,492.0 735.0,492.0" fill="#00e5ee"/>
<polygon points="679.4,508.0 733.6,540.0 740.0,540.0 740.0,544.0 668.0,547.0 668.0,540.0 679.4,538.0" fill="#c9c9c9" stroke="#fff" stroke-width="0.5"/>
<polygon points="668.0,479.0 673.5,478.5 673.5,488.0 668.0,488.0" fill="#00e5ee"/>
<polygon points="679.0,477.0 692.0,476.0 692.0,488.0 686.0,488.0" fill="#007a78"/>
<polygon points="688.0,476.0 694.0,476.0 694.0,489.0 688.0,489.0" fill="#00e5ee"/>
<polygon points="680.0,547.0 694.0,546.0 694.0,585.0 680.0,577.0" fill="#3f2829"/>
<polygon points="694.0,546.0 706.5,545.5 706.5,592.0 694.0,585.0" fill="#f2f2f2"/>
<polyline points="697.0,547.0 697.0,587.0" fill="none" stroke="#444" stroke-width="1"/>
<polyline points="701.0,547.0 701.0,589.0" fill="none" stroke="#444" stroke-width="1.2"/>
<polyline points="704.5,547.0 704.5,591.0" fill="none" stroke="#777" stroke-width="0.8"/>
<polygon points="706.5,546.7 732.6,544.6 732.6,609.0 706.5,592.0" fill="#3f2829"/>
<polygon points="732.6,544.6 739.4,544.0 739.4,609.0 732.6,609.0" fill="#f4f4f4"/>
<polygon points="735.0,563.0 738.0,563.0 738.0,575.0 735.0,575.0" fill="#c08080"/>
<polygon points="735.0,545.0 739.0,545.0 739.0,561.0 735.0,561.0" fill="#00e5ee"/>
<polygon points="679.4,577.0 733.6,609.0 740.0,609.0 740.0,613.0 668.0,616.0 668.0,609.0 679.4,607.0" fill="#c9c9c9" stroke="#fff" stroke-width="0.5"/>
<polygon points="668.0,548.0 673.5,547.5 673.5,557.0 668.0,557.0" fill="#00e5ee"/>
<polygon points="679.0,546.0 692.0,545.0 692.0,557.0 686.0,557.0" fill="#007a78"/>
<polygon points="688.0,545.0 694.0,545.0 694.0,558.0 688.0,558.0" fill="#00e5ee"/>
<polygon points="680.0,616.0 694.0,615.0 694.0,655.0 680.0,647.0" fill="#3f2829"/>
<polygon points="694.0,615.0 706.5,614.5 706.5,662.0 694.0,655.0" fill="#f2f2f2"/>
<polyline points="697.0,616.0 697.0,657.0" fill="none" stroke="#444" stroke-width="1"/>
<polyline points="701.0,616.0 701.0,659.0" fill="none" stroke="#444" stroke-width="1.2"/>
<polyline points="704.5,616.0 704.5,661.0" fill="none" stroke="#777" stroke-width="0.8"/>
<polygon points="706.5,615.7 732.6,613.6 732.6,679.0 706.5,662.0" fill="#3f2829"/>
<polygon points="732.6,613.6 739.4,613.0 739.4,679.0 732.6,679.0" fill="#f4f4f4"/>
<polygon points="735.0,632.0 738.0,632.0 738.0,644.0 735.0,644.0" fill="#c08080"/>
<polygon points="735.0,614.0 739.0,614.0 739.0,630.0 735.0,630.0" fill="#00e5ee"/>
<polygon points="668.0,617.0 673.5,616.5 673.5,626.0 668.0,626.0" fill="#00e5ee"/>
<polygon points="679.0,615.0 692.0,614.0 692.0,626.0 686.0,626.0" fill="#007a78"/>
<polygon points="688.0,614.0 694.0,614.0 694.0,627.0 688.0,627.0" fill="#00e5ee"/>
<polygon points="668.0,334.5 740.0,331.5 740.0,338.0 668.0,340.5" fill="#d6d6d6" stroke="#fff" stroke-width="0.6"/>
<polygon points="668.0,404.5 740.0,401.5 740.0,408.0 668.0,410.5" fill="#d6d6d6" stroke="#fff" stroke-width="0.6"/>
<polygon points="668.0,473.5 740.0,470.5 740.0,477.0 668.0,479.5" fill="#d6d6d6" stroke="#fff" stroke-width="0.6"/>
<polygon points="668.0,542.5 740.0,539.5 740.0,546.0 668.0,548.5" fill="#d6d6d6" stroke="#fff" stroke-width="0.6"/>
<polygon points="668.0,611.5 740.0,608.5 740.0,615.0 668.0,617.5" fill="#d6d6d6" stroke="#fff" stroke-width="0.6"/>
<polygon points="682.6,283.4 695.3,290.0 695.3,329.7 682.6,326.7" fill="#f2f2f2"/>
<polygon points="685.0,287.0 688.0,288.5 688.0,327.0 685.0,326.0" fill="#3a3030"/>
<polygon points="690.0,289.5 693.5,291.3 693.5,328.5 690.0,327.5" fill="#3a3030"/>
<polygon points="696.8,323.0 715.5,320.7 724.5,326.7 700.0,329.0" fill="#d4d4d4" stroke="#fff" stroke-width="0.6"/>
<polygon points="668.0,334.0 612.0,374.0 612.0,383.0 668.0,343.0" fill="#d4d4d4"/>
<polyline points="668.0,334.0 612.0,374.0" fill="none" stroke="#fff" stroke-width="1"/>
<polyline points="668.0,343.0 612.0,383.0" fill="none" stroke="#fff" stroke-width="0.8"/>
<polyline points="668.0,329.8 612.0,369.8" fill="none" stroke="#fff" stroke-width="0.9"/>
<polyline points="668.0,325.6 612.0,365.6" fill="none" stroke="#fff" stroke-width="0.9"/>
<polyline points="668.0,321.4 612.0,361.4" fill="none" stroke="#fff" stroke-width="0.9"/>
<polyline points="668.0,317.2 612.0,357.2" fill="none" stroke="#fff" stroke-width="0.9"/>
<polyline points="668.0,334.0 668.0,316.0" fill="none" stroke="#fff" stroke-width="0.9"/>
<polyline points="660.0,339.7 660.0,321.7" fill="none" stroke="#fff" stroke-width="0.9"/>
<polyline points="652.0,345.4 652.0,327.4" fill="none" stroke="#fff" stroke-width="0.9"/>
<polyline points="644.0,351.1 644.0,333.1" fill="none" stroke="#fff" stroke-width="0.9"/>
<polyline points="636.0,356.9 636.0,338.9" fill="none" stroke="#fff" stroke-width="0.9"/>
<polyline points="628.0,362.6 628.0,344.6" fill="none" stroke="#fff" stroke-width="0.9"/>
<polyline points="620.0,368.3 620.0,350.3" fill="none" stroke="#fff" stroke-width="0.9"/>
<polyline points="612.0,374.0 612.0,356.0" fill="none" stroke="#fff" stroke-width="0.9"/>
<polygon points="588.0,374.0 612.0,374.0 624.0,381.0 600.0,385.0 588.0,383.0" fill="#d0d0d0" stroke="#fff" stroke-width="0.6"/>
<polyline points="590.0,369.8 612.0,369.8" fill="none" stroke="#fff" stroke-width="0.8"/>
<polyline points="590.0,365.6 612.0,365.6" fill="none" stroke="#fff" stroke-width="0.8"/>
<polyline points="590.0,361.4 612.0,361.4" fill="none" stroke="#fff" stroke-width="0.8"/>
<polyline points="590.0,357.2 612.0,357.2" fill="none" stroke="#fff" stroke-width="0.8"/>
<polyline points="590.0,374.0 590.0,355.0" fill="none" stroke="#fff" stroke-width="0.9"/>
<polyline points="600.0,374.0 600.0,355.0" fill="none" stroke="#fff" stroke-width="0.9"/>
<polygon points="612.0,376.0 668.0,404.0 668.0,413.0 612.0,385.0" fill="#d4d4d4"/>
<polyline points="612.0,376.0 668.0,404.0" fill="none" stroke="#fff" stroke-width="1"/>
<polyline points="612.0,385.0 668.0,413.0" fill="none" stroke="#fff" stroke-width="0.8"/>
<polyline points="612.0,371.8 668.0,399.8" fill="none" stroke="#fff" stroke-width="0.9"/>
<polyline points="612.0,367.6 668.0,395.6" fill="none" stroke="#fff" stroke-width="0.9"/>
<polyline points="612.0,363.4 668.0,391.4" fill="none" stroke="#fff" stroke-width="0.9"/>
<polyline points="612.0,359.2 668.0,387.2" fill="none" stroke="#fff" stroke-width="0.9"/>
<polyline points="612.0,376.0 612.0,358.0" fill="none" stroke="#fff" stroke-width="0.9"/>
<polyline points="620.0,380.0 620.0,362.0" fill="none" stroke="#fff" stroke-width="0.9"/>
<polyline points="628.0,384.0 628.0,366.0" fill="none" stroke="#fff" stroke-width="0.9"/>
<polyline points="636.0,388.0 636.0,370.0" fill="none" stroke="#fff" stroke-width="0.9"/>
<polyline points="644.0,392.0 644.0,374.0" fill="none" stroke="#fff" stroke-width="0.9"/>
<polyline points="652.0,396.0 652.0,378.0" fill="none" stroke="#fff" stroke-width="0.9"/>
<polyline points="660.0,400.0 660.0,382.0" fill="none" stroke="#fff" stroke-width="0.9"/>
<polyline points="668.0,404.0 668.0,386.0" fill="none" stroke="#fff" stroke-width="0.9"/>
<polygon points="668.0,404.0 612.0,444.0 612.0,453.0 668.0,413.0" fill="#d4d4d4"/>
<polyline points="668.0,404.0 612.0,444.0" fill="none" stroke="#fff" stroke-width="1"/>
<polyline points="668.0,413.0 612.0,453.0" fill="none" stroke="#fff" stroke-width="0.8"/>
<polyline points="668.0,399.8 612.0,439.8" fill="none" stroke="#fff" stroke-width="0.9"/>
<polyline points="668.0,395.6 612.0,435.6" fill="none" stroke="#fff" stroke-width="0.9"/>
<polyline points="668.0,391.4 612.0,431.4" fill="none" stroke="#fff" stroke-width="0.9"/>
<polyline points="668.0,387.2 612.0,427.2" fill="none" stroke="#fff" stroke-width="0.9"/>
<polyline points="668.0,404.0 668.0,386.0" fill="none" stroke="#fff" stroke-width="0.9"/>
<polyline points="660.0,409.7 660.0,391.7" fill="none" stroke="#fff" stroke-width="0.9"/>
<polyline points="652.0,415.4 652.0,397.4" fill="none" stroke="#fff" stroke-width="0.9"/>
<polyline points="644.0,421.1 644.0,403.1" fill="none" stroke="#fff" stroke-width="0.9"/>
<polyline points="636.0,426.9 636.0,408.9" fill="none" stroke="#fff" stroke-width="0.9"/>
<polyline points="628.0,432.6 628.0,414.6" fill="none" stroke="#fff" stroke-width="0.9"/>
<polyline points="620.0,438.3 620.0,420.3" fill="none" stroke="#fff" stroke-width="0.9"/>
<polyline points="612.0,444.0 612.0,426.0" fill="none" stroke="#fff" stroke-width="0.9"/>
<polygon points="588.0,444.0 612.0,444.0 624.0,451.0 600.0,455.0 588.0,453.0" fill="#d0d0d0" stroke="#fff" stroke-width="0.6"/>
<polyline points="590.0,439.8 612.0,439.8" fill="none" stroke="#fff" stroke-width="0.8"/>
<polyline points="590.0,435.6 612.0,435.6" fill="none" stroke="#fff" stroke-width="0.8"/>
<polyline points="590.0,431.4 612.0,431.4" fill="none" stroke="#fff" stroke-width="0.8"/>
<polyline points="590.0,427.2 612.0,427.2" fill="none" stroke="#fff" stroke-width="0.8"/>
<polyline points="590.0,444.0 590.0,425.0" fill="none" stroke="#fff" stroke-width="0.9"/>
<polyline points="600.0,444.0 600.0,425.0" fill="none" stroke="#fff" stroke-width="0.9"/>
<polygon points="612.0,446.0 668.0,474.0 668.0,483.0 612.0,455.0" fill="#d4d4d4"/>
<polyline points="612.0,446.0 668.0,474.0" fill="none" stroke="#fff" stroke-width="1"/>
<polyline points="612.0,455.0 668.0,483.0" fill="none" stroke="#fff" stroke-width="0.8"/>
<polyline points="612.0,441.8 668.0,469.8" fill="none" stroke="#fff" stroke-width="0.9"/>
<polyline points="612.0,437.6 668.0,465.6" fill="none" stroke="#fff" stroke-width="0.9"/>
<polyline points="612.0,433.4 668.0,461.4" fill="none" stroke="#fff" stroke-width="0.9"/>
<polyline points="612.0,429.2 668.0,457.2" fill="none" stroke="#fff" stroke-width="0.9"/>
<polyline points="612.0,446.0 612.0,428.0" fill="none" stroke="#fff" stroke-width="0.9"/>
<polyline points="620.0,450.0 620.0,432.0" fill="none" stroke="#fff" stroke-width="0.9"/>
<polyline points="628.0,454.0 628.0,436.0" fill="none" stroke="#fff" stroke-width="0.9"/>
<polyline points="636.0,458.0 636.0,440.0" fill="none" stroke="#fff" stroke-width="0.9"/>
<polyline points="644.0,462.0 644.0,444.0" fill="none" stroke="#fff" stroke-width="0.9"/>
<polyline points="652.0,466.0 652.0,448.0" fill="none" stroke="#fff" stroke-width="0.9"/>
<polyline points="660.0,470.0 660.0,452.0" fill="none" stroke="#fff" stroke-width="0.9"/>
<polyline points="668.0,474.0 668.0,456.0" fill="none" stroke="#fff" stroke-width="0.9"/>
<polygon points="668.0,473.0 612.0,513.0 612.0,522.0 668.0,482.0" fill="#d4d4d4"/>
<polyline points="668.0,473.0 612.0,513.0" fill="none" stroke="#fff" stroke-width="1"/>
<polyline points="668.0,482.0 612.0,522.0" fill="none" stroke="#fff" stroke-width="0.8"/>
<polyline points="668.0,468.8 612.0,508.8" fill="none" stroke="#fff" stroke-width="0.9"/>
<polyline points="668.0,464.6 612.0,504.6" fill="none" stroke="#fff" stroke-width="0.9"/>
<polyline points="668.0,460.4 612.0,500.4" fill="none" stroke="#fff" stroke-width="0.9"/>
<polyline points="668.0,456.2 612.0,496.2" fill="none" stroke="#fff" stroke-width="0.9"/>
<polyline points="668.0,473.0 668.0,455.0" fill="none" stroke="#fff" stroke-width="0.9"/>
<polyline points="660.0,478.7 660.0,460.7" fill="none" stroke="#fff" stroke-width="0.9"/>
<polyline points="652.0,484.4 652.0,466.4" fill="none" stroke="#fff" stroke-width="0.9"/>
<polyline points="644.0,490.1 644.0,472.1" fill="none" stroke="#fff" stroke-width="0.9"/>
<polyline points="636.0,495.9 636.0,477.9" fill="none" stroke="#fff" stroke-width="0.9"/>
<polyline points="628.0,501.6 628.0,483.6" fill="none" stroke="#fff" stroke-width="0.9"/>
<polyline points="620.0,507.3 620.0,489.3" fill="none" stroke="#fff" stroke-width="0.9"/>
<polyline points="612.0,513.0 612.0,495.0" fill="none" stroke="#fff" stroke-width="0.9"/>
<polygon points="588.0,513.0 612.0,513.0 624.0,520.0 600.0,524.0 588.0,522.0" fill="#d0d0d0" stroke="#fff" stroke-width="0.6"/>
<polyline points="590.0,508.8 612.0,508.8" fill="none" stroke="#fff" stroke-width="0.8"/>
<polyline points="590.0,504.6 612.0,504.6" fill="none" stroke="#fff" stroke-width="0.8"/>
<polyline points="590.0,500.4 612.0,500.4" fill="none" stroke="#fff" stroke-width="0.8"/>
<polyline points="590.0,496.2 612.0,496.2" fill="none" stroke="#fff" stroke-width="0.8"/>
<polyline points="590.0,513.0 590.0,494.0" fill="none" stroke="#fff" stroke-width="0.9"/>
<polyline points="600.0,513.0 600.0,494.0" fill="none" stroke="#fff" stroke-width="0.9"/>
<polygon points="612.0,515.0 668.0,543.0 668.0,552.0 612.0,524.0" fill="#d4d4d4"/>
<polyline points="612.0,515.0 668.0,543.0" fill="none" stroke="#fff" stroke-width="1"/>
<polyline points="612.0,524.0 668.0,552.0" fill="none" stroke="#fff" stroke-width="0.8"/>
<polyline points="612.0,510.8 668.0,538.8" fill="none" stroke="#fff" stroke-width="0.9"/>
<polyline points="612.0,506.6 668.0,534.6" fill="none" stroke="#fff" stroke-width="0.9"/>
<polyline points="612.0,502.4 668.0,530.4" fill="none" stroke="#fff" stroke-width="0.9"/>
<polyline points="612.0,498.2 668.0,526.2" fill="none" stroke="#fff" stroke-width="0.9"/>
<polyline points="612.0,515.0 612.0,497.0" fill="none" stroke="#fff" stroke-width="0.9"/>
<polyline points="620.0,519.0 620.0,501.0" fill="none" stroke="#fff" stroke-width="0.9"/>
<polyline points="628.0,523.0 628.0,505.0" fill="none" stroke="#fff" stroke-width="0.9"/>
<polyline points="636.0,527.0 636.0,509.0" fill="none" stroke="#fff" stroke-width="0.9"/>
<polyline points="644.0,531.0 644.0,513.0" fill="none" stroke="#fff" stroke-width="0.9"/>
<polyline points="652.0,535.0 652.0,517.0" fill="none" stroke="#fff" stroke-width="0.9"/>
<polyline points="660.0,539.0 660.0,521.0" fill="none" stroke="#fff" stroke-width="0.9"/>
<polyline points="668.0,543.0 668.0,525.0" fill="none" stroke="#fff" stroke-width="0.9"/>
<polygon points="668.0,542.0 612.0,582.0 612.0,591.0 668.0,551.0" fill="#d4d4d4"/>
<polyline points="668.0,542.0 612.0,582.0" fill="none" stroke="#fff" stroke-width="1"/>
<polyline points="668.0,551.0 612.0,591.0" fill="none" stroke="#fff" stroke-width="0.8"/>
<polyline points="668.0,537.8 612.0,577.8" fill="none" stroke="#fff" stroke-width="0.9"/>
<polyline points="668.0,533.6 612.0,573.6" fill="none" stroke="#fff" stroke-width="0.9"/>
<polyline points="668.0,529.4 612.0,569.4" fill="none" stroke="#fff" stroke-width="0.9"/>
<polyline points="668.0,525.2 612.0,565.2" fill="none" stroke="#fff" stroke-width="0.9"/>
<polyline points="668.0,542.0 668.0,524.0" fill="none" stroke="#fff" stroke-width="0.9"/>
<polyline points="660.0,547.7 660.0,529.7" fill="none" stroke="#fff" stroke-width="0.9"/>
<polyline points="652.0,553.4 652.0,535.4" fill="none" stroke="#fff" stroke-width="0.9"/>
<polyline points="644.0,559.1 644.0,541.1" fill="none" stroke="#fff" stroke-width="0.9"/>
<polyline points="636.0,564.9 636.0,546.9" fill="none" stroke="#fff" stroke-width="0.9"/>
<polyline points="628.0,570.6 628.0,552.6" fill="none" stroke="#fff" stroke-width="0.9"/>
<polyline points="620.0,576.3 620.0,558.3" fill="none" stroke="#fff" stroke-width="0.9"/>
<polyline points="612.0,582.0 612.0,564.0" fill="none" stroke="#fff" stroke-width="0.9"/>
<polygon points="588.0,582.0 612.0,582.0 624.0,589.0 600.0,593.0 588.0,591.0" fill="#d0d0d0" stroke="#fff" stroke-width="0.6"/>
<polyline points="590.0,577.8 612.0,577.8" fill="none" stroke="#fff" stroke-width="0.8"/>
<polyline points="590.0,573.6 612.0,573.6" fill="none" stroke="#fff" stroke-width="0.8"/>
<polyline points="590.0,569.4 612.0,569.4" fill="none" stroke="#fff" stroke-width="0.8"/>
<polyline points="590.0,565.2 612.0,565.2" fill="none" stroke="#fff" stroke-width="0.8"/>
<polyline points="590.0,582.0 590.0,563.0" fill="none" stroke="#fff" stroke-width="0.9"/>
<polyline points="600.0,582.0 600.0,563.0" fill="none" stroke="#fff" stroke-width="0.9"/>
<polygon points="612.0,584.0 668.0,612.0 668.0,621.0 612.0,593.0" fill="#d4d4d4"/>
<polyline points="612.0,584.0 668.0,612.0" fill="none" stroke="#fff" stroke-width="1"/>
<polyline points="612.0,593.0 668.0,621.0" fill="none" stroke="#fff" stroke-width="0.8"/>
<polyline points="612.0,579.8 668.0,607.8" fill="none" stroke="#fff" stroke-width="0.9"/>
<polyline points="612.0,575.6 668.0,603.6" fill="none" stroke="#fff" stroke-width="0.9"/>
<polyline points="612.0,571.4 668.0,599.4" fill="none" stroke="#fff" stroke-width="0.9"/>
<polyline points="612.0,567.2 668.0,595.2" fill="none" stroke="#fff" stroke-width="0.9"/>
<polyline points="612.0,584.0 612.0,566.0" fill="none" stroke="#fff" stroke-width="0.9"/>
<polyline points="620.0,588.0 620.0,570.0" fill="none" stroke="#fff" stroke-width="0.9"/>
<polyline points="628.0,592.0 628.0,574.0" fill="none" stroke="#fff" stroke-width="0.9"/>
<polyline points="636.0,596.0 636.0,578.0" fill="none" stroke="#fff" stroke-width="0.9"/>
<polyline points="644.0,600.0 644.0,582.0" fill="none" stroke="#fff" stroke-width="0.9"/>
<polyline points="652.0,604.0 652.0,586.0" fill="none" stroke="#fff" stroke-width="0.9"/>
<polyline points="660.0,608.0 660.0,590.0" fill="none" stroke="#fff" stroke-width="0.9"/>
<polyline points="668.0,612.0 668.0,594.0" fill="none" stroke="#fff" stroke-width="0.9"/>
<polygon points="668.0,611.0 612.0,651.0 612.0,660.0 668.0,620.0" fill="#d4d4d4"/>
<polyline points="668.0,611.0 612.0,651.0" fill="none" stroke="#fff" stroke-width="1"/>
<polyline points="668.0,620.0 612.0,660.0" fill="none" stroke="#fff" stroke-width="0.8"/>
<polyline points="668.0,606.8 612.0,646.8" fill="none" stroke="#fff" stroke-width="0.9"/>
<polyline points="668.0,602.6 612.0,642.6" fill="none" stroke="#fff" stroke-width="0.9"/>
<polyline points="668.0,598.4 612.0,638.4" fill="none" stroke="#fff" stroke-width="0.9"/>
<polyline points="668.0,594.2 612.0,634.2" fill="none" stroke="#fff" stroke-width="0.9"/>
<polyline points="668.0,611.0 668.0,593.0" fill="none" stroke="#fff" stroke-width="0.9"/>
<polyline points="660.0,616.7 660.0,598.7" fill="none" stroke="#fff" stroke-width="0.9"/>
<polyline points="652.0,622.4 652.0,604.4" fill="none" stroke="#fff" stroke-width="0.9"/>
<polyline points="644.0,628.1 644.0,610.1" fill="none" stroke="#fff" stroke-width="0.9"/>
<polyline points="636.0,633.9 636.0,615.9" fill="none" stroke="#fff" stroke-width="0.9"/>
<polyline points="628.0,639.6 628.0,621.6" fill="none" stroke="#fff" stroke-width="0.9"/>
<polyline points="620.0,645.3 620.0,627.3" fill="none" stroke="#fff" stroke-width="0.9"/>
<polyline points="612.0,651.0 612.0,633.0" fill="none" stroke="#fff" stroke-width="0.9"/>
<polygon points="588.0,651.0 612.0,651.0 624.0,658.0 600.0,662.0 588.0,660.0" fill="#d0d0d0" stroke="#fff" stroke-width="0.6"/>
<polyline points="590.0,646.8 612.0,646.8" fill="none" stroke="#fff" stroke-width="0.8"/>
<polyline points="590.0,642.6 612.0,642.6" fill="none" stroke="#fff" stroke-width="0.8"/>
<polyline points="590.0,638.4 612.0,638.4" fill="none" stroke="#fff" stroke-width="0.8"/>
<polyline points="590.0,634.2 612.0,634.2" fill="none" stroke="#fff" stroke-width="0.8"/>
<polyline points="590.0,651.0 590.0,632.0" fill="none" stroke="#fff" stroke-width="0.9"/>
<polyline points="600.0,651.0 600.0,632.0" fill="none" stroke="#fff" stroke-width="0.9"/>
<polygon points="612.0,653.0 668.0,684.0 668.0,693.0 612.0,662.0" fill="#d4d4d4"/>
<polyline points="612.0,653.0 668.0,684.0" fill="none" stroke="#fff" stroke-width="1"/>
<polyline points="612.0,662.0 668.0,693.0" fill="none" stroke="#fff" stroke-width="0.8"/>
<polyline points="612.0,648.8 668.0,679.8" fill="none" stroke="#fff" stroke-width="0.9"/>
<polyline points="612.0,644.6 668.0,675.6" fill="none" stroke="#fff" stroke-width="0.9"/>
<polyline points="612.0,640.4 668.0,671.4" fill="none" stroke="#fff" stroke-width="0.9"/>
<polyline points="612.0,636.2 668.0,667.2" fill="none" stroke="#fff" stroke-width="0.9"/>
<polyline points="612.0,653.0 612.0,635.0" fill="none" stroke="#fff" stroke-width="0.9"/>
<polyline points="620.0,657.4 620.0,639.4" fill="none" stroke="#fff" stroke-width="0.9"/>
<polyline points="628.0,661.9 628.0,643.9" fill="none" stroke="#fff" stroke-width="0.9"/>
<polyline points="636.0,666.3 636.0,648.3" fill="none" stroke="#fff" stroke-width="0.9"/>
<polyline points="644.0,670.7 644.0,652.7" fill="none" stroke="#fff" stroke-width="0.9"/>
<polyline points="652.0,675.1 652.0,657.1" fill="none" stroke="#fff" stroke-width="0.9"/>
<polyline points="660.0,679.6 660.0,661.6" fill="none" stroke="#fff" stroke-width="0.9"/>
<polyline points="668.0,684.0 668.0,666.0" fill="none" stroke="#fff" stroke-width="0.9"/>
<polygon points="582.8,348.0 587.5,350.0 587.5,366.0 582.8,364.0" fill="#00e5ee"/>
<polyline points="582.8,366.0 587.0,368.0" fill="none" stroke="#fff" stroke-width="0.8"/>
<polygon points="582.8,418.0 587.5,420.0 587.5,436.0 582.8,434.0" fill="#00e5ee"/>
<polyline points="582.8,436.0 587.0,438.0" fill="none" stroke="#fff" stroke-width="0.8"/>
<polygon points="582.8,487.0 587.5,489.0 587.5,505.0 582.8,503.0" fill="#00e5ee"/>
<polyline points="582.8,505.0 587.0,507.0" fill="none" stroke="#fff" stroke-width="0.8"/>
<polygon points="582.8,556.0 587.5,558.0 587.5,574.0 582.8,572.0" fill="#00e5ee"/>
<polyline points="582.8,574.0 587.0,576.0" fill="none" stroke="#fff" stroke-width="0.8"/>
<polygon points="582.8,625.0 587.5,627.0 587.5,643.0 582.8,641.0" fill="#00e5ee"/>
<polyline points="582.8,643.0 587.0,645.0" fill="none" stroke="#fff" stroke-width="0.8"/>
<polygon points="589.0,413.0 640.0,405.0 636.0,410.0 589.0,419.0" fill="#00e5ee" opacity="0.45"/>
<polygon points="583.0,477.0 648.0,474.0 640.0,481.0 589.0,489.0" fill="#00e5ee"/>
<polygon points="589.0,553.0 640.0,545.0 636.0,550.0 589.0,558.0" fill="#00e5ee" opacity="0.35"/>
<polygon points="739.4,331.0 803.3,324.5 803.3,367.0 739.4,373.5" fill="#b07878"/>
<polygon points="803.3,324.5 808.9,324.0 808.9,368.0 803.3,367.0" fill="#f2e500"/>
<polygon points="808.9,324.0 848.0,320.0 848.0,393.0 808.9,368.0" fill="#b07878"/>
<polygon points="808.9,324.0 813.0,323.6 813.0,371.0 808.9,368.0" fill="#3f2829"/>
<polygon points="815.0,329.0 819.0,328.5 819.0,361.0 815.0,361.0" fill="#f4f4f4"/>
<polygon points="826.0,335.0 832.0,334.0 832.0,373.0 826.0,371.0" fill="#f4f4f4"/>
<polygon points="838.0,339.0 843.0,338.5 843.0,383.0 838.0,381.0" fill="#f4f4f4"/>
<polygon points="810.0,363.0 846.0,384.0 846.0,395.0 810.0,370.0" fill="#f4f4f4"/>
<polygon points="816.0,367.0 824.0,372.0 824.0,379.0 816.0,374.0" fill="#3f2829"/>
<polygon points="830.0,375.0 838.0,380.0 838.0,388.0 830.0,383.0" fill="#3f2829"/>
<polygon points="812.0,357.0 822.0,356.0 866.0,374.0 866.0,377.0 850.0,379.0" fill="#d4d4d4" stroke="#fff" stroke-width="0.6"/>
<polygon points="851.0,382.0 861.0,383.0 861.0,399.0 851.0,397.0" fill="#8c8c8c" stroke="#fff" stroke-width="0.8"/>
<polygon points="853.0,385.0 857.0,385.4 857.0,396.0 853.0,395.0" fill="#555"/>
<polygon points="826.0,326.0 846.0,323.5 846.0,341.0" fill="#007a78" stroke="#fff" stroke-width="0.5"/>
<polygon points="846.0,323.0 850.5,323.0 850.5,345.0 846.0,345.0" fill="#00e5ee"/>
<polygon points="851.0,326.0 864.0,323.5 864.0,334.0 851.0,334.0" fill="#3f2829" stroke="#fff" stroke-width="0.5"/>
<polygon points="850.0,334.0 865.0,335.0 865.0,339.0 850.0,339.0" fill="#d8d8d8" stroke="#fff" stroke-width="0.5"/>
<polyline points="851.5,342.0 851.5,375.0" fill="none" stroke="#fff" stroke-width="1"/>
<polyline points="856.5,344.0 856.5,376.0" fill="none" stroke="#fff" stroke-width="1"/>
<polyline points="851.5,342.0 856.5,344.0" fill="none" stroke="#fff" stroke-width="1"/>
<polygon points="739.4,406.0 803.3,399.5 803.3,436.0 739.4,442.5" fill="#b07878"/>
<polygon points="803.3,399.5 808.9,399.0 808.9,437.0 803.3,436.0" fill="#f2e500"/>
<polygon points="808.9,399.0 848.0,395.0 848.0,462.0 808.9,437.0" fill="#b07878"/>
<polygon points="808.9,399.0 813.0,398.6 813.0,440.0 808.9,437.0" fill="#3f2829"/>
<polygon points="815.0,404.0 819.0,403.5 819.0,430.0 815.0,430.0" fill="#f4f4f4"/>
<polygon points="826.0,410.0 832.0,409.0 832.0,442.0 826.0,440.0" fill="#f4f4f4"/>
<polygon points="838.0,414.0 843.0,413.5 843.0,452.0 838.0,450.0" fill="#f4f4f4"/>
<polygon points="810.0,432.0 846.0,453.0 846.0,464.0 810.0,439.0" fill="#f4f4f4"/>
<polygon points="816.0,436.0 824.0,441.0 824.0,448.0 816.0,443.0" fill="#3f2829"/>
<polygon points="830.0,444.0 838.0,449.0 838.0,457.0 830.0,452.0" fill="#3f2829"/>
<polygon points="812.0,426.0 822.0,425.0 866.0,443.0 866.0,446.0 850.0,448.0" fill="#d4d4d4" stroke="#fff" stroke-width="0.6"/>
<polygon points="851.0,451.0 861.0,452.0 861.0,468.0 851.0,466.0" fill="#8c8c8c" stroke="#fff" stroke-width="0.8"/>
<polygon points="853.0,454.0 857.0,454.4 857.0,465.0 853.0,464.0" fill="#555"/>
<polygon points="826.0,396.0 846.0,393.5 846.0,411.0" fill="#007a78" stroke="#fff" stroke-width="0.5"/>
<polygon points="846.0,393.0 850.5,393.0 850.5,415.0 846.0,415.0" fill="#00e5ee"/>
<polygon points="848.0,397.0 865.0,404.0 865.0,408.0 849.0,409.0" fill="#d8d8d8" stroke="#fff" stroke-width="0.5"/>
<polyline points="851.5,412.0 851.5,444.0" fill="none" stroke="#fff" stroke-width="1"/>
<polyline points="856.5,414.0 856.5,445.0" fill="none" stroke="#fff" stroke-width="1"/>
<polyline points="851.5,412.0 856.5,414.0" fill="none" stroke="#fff" stroke-width="1"/>
<polygon points="739.4,475.0 803.3,468.5 803.3,505.0 739.4,511.5" fill="#b07878"/>
<polygon points="803.3,468.5 808.9,468.0 808.9,506.0 803.3,505.0" fill="#f2e500"/>
<polygon points="808.9,468.0 848.0,464.0 848.0,531.0 808.9,506.0" fill="#b07878"/>
<polygon points="808.9,468.0 813.0,467.6 813.0,509.0 808.9,506.0" fill="#3f2829"/>
<polygon points="815.0,473.0 819.0,472.5 819.0,499.0 815.0,499.0" fill="#f4f4f4"/>
<polygon points="826.0,479.0 832.0,478.0 832.0,511.0 826.0,509.0" fill="#f4f4f4"/>
<polygon points="838.0,483.0 843.0,482.5 843.0,521.0 838.0,519.0" fill="#f4f4f4"/>
<polygon points="810.0,501.0 846.0,522.0 846.0,533.0 810.0,508.0" fill="#f4f4f4"/>
<polygon points="816.0,505.0 824.0,510.0 824.0,517.0 816.0,512.0" fill="#3f2829"/>
<polygon points="830.0,513.0 838.0,518.0 838.0,526.0 830.0,521.0" fill="#3f2829"/>
<polygon points="812.0,495.0 822.0,494.0 866.0,512.0 866.0,515.0 850.0,517.0" fill="#d4d4d4" stroke="#fff" stroke-width="0.6"/>
<polygon points="851.0,520.0 861.0,521.0 861.0,537.0 851.0,535.0" fill="#8c8c8c" stroke="#fff" stroke-width="0.8"/>
<polygon points="853.0,523.0 857.0,523.4 857.0,534.0 853.0,533.0" fill="#555"/>
<polygon points="826.0,465.0 846.0,462.5 846.0,480.0" fill="#007a78" stroke="#fff" stroke-width="0.5"/>
<polygon points="846.0,462.0 850.5,462.0 850.5,484.0 846.0,484.0" fill="#00e5ee"/>
<polygon points="848.0,466.0 865.0,473.0 865.0,477.0 849.0,478.0" fill="#d8d8d8" stroke="#fff" stroke-width="0.5"/>
<polyline points="851.5,481.0 851.5,513.0" fill="none" stroke="#fff" stroke-width="1"/>
<polyline points="856.5,483.0 856.5,514.0" fill="none" stroke="#fff" stroke-width="1"/>
<polyline points="851.5,481.0 856.5,483.0" fill="none" stroke="#fff" stroke-width="1"/>
<polygon points="739.4,544.0 803.3,537.5 803.3,574.0 739.4,580.5" fill="#b07878"/>
<polygon points="803.3,537.5 808.9,537.0 808.9,575.0 803.3,574.0" fill="#f2e500"/>
<polygon points="808.9,537.0 848.0,533.0 848.0,600.0 808.9,575.0" fill="#b07878"/>
<polygon points="808.9,537.0 813.0,536.6 813.0,578.0 808.9,575.0" fill="#3f2829"/>
<polygon points="815.0,542.0 819.0,541.5 819.0,568.0 815.0,568.0" fill="#f4f4f4"/>
<polygon points="826.0,548.0 832.0,547.0 832.0,580.0 826.0,578.0" fill="#f4f4f4"/>
<polygon points="838.0,552.0 843.0,551.5 843.0,590.0 838.0,588.0" fill="#f4f4f4"/>
<polygon points="810.0,570.0 846.0,591.0 846.0,602.0 810.0,577.0" fill="#f4f4f4"/>
<polygon points="816.0,574.0 824.0,579.0 824.0,586.0 816.0,581.0" fill="#3f2829"/>
<polygon points="830.0,582.0 838.0,587.0 838.0,595.0 830.0,590.0" fill="#3f2829"/>
<polygon points="812.0,564.0 822.0,563.0 866.0,581.0 866.0,584.0 850.0,586.0" fill="#d4d4d4" stroke="#fff" stroke-width="0.6"/>
<polygon points="851.0,589.0 861.0,590.0 861.0,606.0 851.0,604.0" fill="#8c8c8c" stroke="#fff" stroke-width="0.8"/>
<polygon points="853.0,592.0 857.0,592.4 857.0,603.0 853.0,602.0" fill="#555"/>
<polygon points="826.0,534.0 846.0,531.5 846.0,549.0" fill="#007a78" stroke="#fff" stroke-width="0.5"/>
<polygon points="846.0,531.0 850.5,531.0 850.5,553.0 846.0,553.0" fill="#00e5ee"/>
<polygon points="848.0,535.0 865.0,542.0 865.0,546.0 849.0,547.0" fill="#d8d8d8" stroke="#fff" stroke-width="0.5"/>
<polyline points="851.5,550.0 851.5,582.0" fill="none" stroke="#fff" stroke-width="1"/>
<polyline points="856.5,552.0 856.5,583.0" fill="none" stroke="#fff" stroke-width="1"/>
<polyline points="851.5,550.0 856.5,552.0" fill="none" stroke="#fff" stroke-width="1"/>
<polygon points="739.4,613.0 803.3,606.5 803.3,659.0 739.4,666.0" fill="#b07878"/>
<polygon points="803.3,606.5 808.9,606.0 808.9,660.0 803.3,659.0" fill="#f2e500"/>
<polygon points="808.9,606.0 848.0,602.0 848.0,687.0 808.9,661.0" fill="#b07878"/>
<polygon points="808.9,606.0 813.0,605.6 813.0,648.0 808.9,645.0" fill="#3f2829"/>
<polygon points="815.0,611.0 819.0,610.5 819.0,638.0 815.0,638.0" fill="#f4f4f4"/>
<polygon points="826.0,617.0 832.0,616.0 832.0,650.0 826.0,648.0" fill="#f4f4f4"/>
<polygon points="838.0,621.0 843.0,620.5 843.0,660.0 838.0,658.0" fill="#f4f4f4"/>
<polygon points="810.0,640.0 846.0,661.0 846.0,672.0 810.0,647.0" fill="#f4f4f4"/>
<polygon points="816.0,644.0 824.0,649.0 824.0,656.0 816.0,651.0" fill="#3f2829"/>
<polygon points="830.0,652.0 838.0,657.0 838.0,665.0 830.0,660.0" fill="#3f2829"/>
<polygon points="826.0,603.0 846.0,600.5 846.0,618.0" fill="#007a78" stroke="#fff" stroke-width="0.5"/>
<polygon points="846.0,600.0 850.5,600.0 850.5,622.0 846.0,622.0" fill="#00e5ee"/>
<polygon points="848.0,604.0 865.0,611.0 865.0,615.0 849.0,616.0" fill="#d8d8d8" stroke="#fff" stroke-width="0.5"/>
<polygon points="739.4,373.5 808.9,367.0 848.0,392.0 848.0,395.5 739.4,406.5" fill="#c9c9c9"/>
<polyline points="739.4,373.5 803.3,367.0" fill="none" stroke="#fff" stroke-width="0.8"/>
<polyline points="739.4,402.0 848.0,392.0" fill="none" stroke="#fff" stroke-width="0.8"/>
<polyline points="739.4,406.5 848.0,395.5" fill="none" stroke="#fff" stroke-width="0.8"/>
<polyline points="745.0,390.0 840.0,381.0" fill="none" stroke="#fff" stroke-width="0.8" stroke-dasharray="4 4"/>
<polygon points="739.4,442.5 808.9,436.0 848.0,461.0 848.0,464.5 739.4,475.5" fill="#c9c9c9"/>
<polyline points="739.4,442.5 803.3,436.0" fill="none" stroke="#fff" stroke-width="0.8"/>
<polyline points="739.4,471.0 848.0,461.0" fill="none" stroke="#fff" stroke-width="0.8"/>
<polyline points="739.4,475.5 848.0,464.5" fill="none" stroke="#fff" stroke-width="0.8"/>
<polyline points="745.0,459.0 840.0,450.0" fill="none" stroke="#fff" stroke-width="0.8" stroke-dasharray="4 4"/>
<polygon points="739.4,511.5 808.9,505.0 848.0,530.0 848.0,533.5 739.4,544.5" fill="#c9c9c9"/>
<polyline points="739.4,511.5 803.3,505.0" fill="none" stroke="#fff" stroke-width="0.8"/>
<polyline points="739.4,540.0 848.0,530.0" fill="none" stroke="#fff" stroke-width="0.8"/>
<polyline points="739.4,544.5 848.0,533.5" fill="none" stroke="#fff" stroke-width="0.8"/>
<polyline points="745.0,528.0 840.0,519.0" fill="none" stroke="#fff" stroke-width="0.8" stroke-dasharray="4 4"/>
<polygon points="739.4,580.5 808.9,574.0 848.0,599.0 848.0,602.5 739.4,613.5" fill="#c9c9c9"/>
<polyline points="739.4,580.5 803.3,574.0" fill="none" stroke="#fff" stroke-width="0.8"/>
<polyline points="739.4,609.0 848.0,599.0" fill="none" stroke="#fff" stroke-width="0.8"/>
<polyline points="739.4,613.5 848.0,602.5" fill="none" stroke="#fff" stroke-width="0.8"/>
<polyline points="745.0,597.0 840.0,588.0" fill="none" stroke="#fff" stroke-width="0.8" stroke-dasharray="4 4"/>
<polygon points="739.4,666.0 808.9,660.0 849.0,683.0 739.4,692.0" fill="#c9c9c9"/>
<polyline points="739.4,666.0 803.3,660.0" fill="none" stroke="#fff" stroke-width="0.8"/>
<polygon points="700.0,329.0 864.0,314.5 866.0,318.0 866.0,322.0 700.0,337.0" fill="#d0d0d0"/>
<polyline points="700.0,333.0 864.0,318.0" fill="none" stroke="#eee" stroke-width="0.8"/>
<polyline points="668.0,338.0 866.0,322.0" fill="none" stroke="#fff" stroke-width="0.8"/>
<polygon points="846.0,330.0 850.4,330.0 850.4,697.0 846.0,697.0" fill="none"/>
<polygon points="846.5,345.0 850.5,345.0 850.5,393.0 846.5,393.0" fill="#c08080" stroke="#fff" stroke-width="0.5"/>
<polygon points="846.5,415.0 850.5,415.0 850.5,463.0 846.5,463.0" fill="#c08080" stroke="#fff" stroke-width="0.5"/>
<polygon points="846.5,484.0 850.5,484.0 850.5,532.0 846.5,532.0" fill="#c08080" stroke="#fff" stroke-width="0.5"/>
<polygon points="846.5,553.0 850.5,553.0 850.5,601.0 846.5,601.0" fill="#c08080" stroke="#fff" stroke-width="0.5"/>
<polygon points="846.5,622.0 850.5,622.0 850.5,670.0 846.5,670.0" fill="#c08080" stroke="#fff" stroke-width="0.5"/>
<rect x="632.0" y="710.7" width="7" height="26" fill="url(#pile)"/>
<rect x="642.0" y="710.0" width="7" height="26" fill="url(#pile)"/>
<rect x="651.0" y="709.4" width="8" height="26" fill="url(#pile)"/>
<rect x="662.0" y="708.6" width="6" height="26" fill="url(#pile)"/>
<rect x="671.0" y="707.9" width="6" height="26" fill="url(#pile)"/>
<rect x="679.0" y="707.3" width="7" height="26" fill="url(#pile)"/>
<rect x="689.0" y="706.6" width="7" height="26" fill="url(#pile)"/>
<rect x="697.0" y="706.0" width="8" height="26" fill="url(#pile)"/>
<rect x="708.0" y="705.2" width="8" height="26" fill="url(#pile)"/>
<rect x="718.0" y="704.5" width="7" height="26" fill="url(#pile)"/>
<rect x="726.0" y="703.9" width="7" height="26" fill="url(#pile)"/>
<rect x="736.0" y="703.2" width="8" height="26" fill="url(#pile)"/>
<rect x="745.0" y="702.5" width="6" height="26" fill="url(#pile)"/>
<rect x="752.0" y="702.0" width="6" height="26" fill="url(#pile)"/>
<rect x="760.0" y="701.5" width="6" height="26" fill="url(#pile)"/>
<rect x="768.0" y="700.9" width="8" height="26" fill="url(#pile)"/>
<rect x="779.0" y="700.1" width="8" height="26" fill="url(#pile)"/>
<rect x="789.0" y="699.4" width="8" height="26" fill="url(#pile)"/>
<rect x="800.0" y="698.6" width="8" height="26" fill="url(#pile)"/>
<rect x="809.0" y="697.9" width="7" height="26" fill="url(#pile)"/>
<rect x="817.0" y="697.3" width="6" height="26" fill="url(#pile)"/>
<polygon points="522.5,687.8 543.0,690.5 583.0,713.5 583.0,725.0 560.0,725.0" fill="#cfcfcf" stroke="#fff" stroke-width="0.6"/>
<polygon points="587.0,700.0 668.0,692.0 740.0,692.0 740.0,690.0 680.0,690.0 587.0,699.0" fill="#c9c9c9"/>
<polygon points="586.8,700.2 849.4,686.7 868.0,690.0 868.0,693.0 849.4,696.0 586.8,715.0" fill="#d0d0d0" stroke="#fff" stroke-width="0.7"/>
<polyline points="586.8,703.2 849.4,688.7" fill="none" stroke="#e8e8e8" stroke-width="0.6"/>
<polygon points="586.8,703.5 849.4,689.5 849.4,696 586.8,715" fill="url(#speck)"/>
<polygon points="686.5,707.0 694.0,706.5 694.0,717.0 686.5,717.0" fill="#00e5ee"/>
<polygon points="730.5,703.0 738.0,702.5 738.0,713.0 730.5,713.0" fill="#00e5ee"/>
<polygon points="845.0,694.5 852.5,694.0 852.5,704.5 845.0,704.5" fill="#00e5ee"/>
<polygon points="726.0,708.0 734.0,707.0 731.0,715.0" fill="#007a78"/>
<polygon points="680.0,713.0 690.0,712.0 686.0,720.0" fill="#007a78"/>
<polygon points="840.0,697.0 848.0,696.0 845.0,703.0" fill="#007a78"/>
<polygon points="399.8,605.5 408.0,603.5 513.6,593.5 506.0,600.0 408.0,611.6" fill="#cfcfcf" stroke="#fff" stroke-width="0.6"/>
<polygon points="513.6,593.5 542.5,611.6 542.5,625.0 506.0,600.0" fill="#c4c4c4" stroke="#fff" stroke-width="0.5"/>
<polygon points="370.0,582.0 408.0,604.0 400.0,609.0 366.0,588.0" fill="#cfcfcf"/>
<polygon points="292.0,474.0 316.6,470.6 353.0,492.6 353.0,500.0 327.6,500.6 292.0,480.0" fill="#d6d6d6" stroke="#fff" stroke-width="0.8"/>
<polygon points="294.0,478.5 328.0,498.0 328.0,500.5 294.0,481.0" fill="#555"/>
<polygon points="321.0,499.0 352.0,512.0 352.0,562.0 321.0,545.0" fill="#5a4040"/>
<polyline points="324.0,501.3 324.0,547.6" fill="none" stroke="#fff" stroke-width="1.6"/>
<polyline points="329.0,503.4 329.0,550.4" fill="none" stroke="#fff" stroke-width="1.6"/>
<polyline points="334.0,505.5 334.0,553.1" fill="none" stroke="#fff" stroke-width="1.6"/>
<polyline points="339.0,507.6 339.0,555.9" fill="none" stroke="#fff" stroke-width="1.6"/>
<polyline points="344.0,509.7 344.0,558.6" fill="none" stroke="#fff" stroke-width="1.6"/>
<polyline points="349.0,511.8 349.0,561.4" fill="none" stroke="#fff" stroke-width="1.6"/>
<polygon points="256.7,546.4 272.6,541.5 310.5,537.8 363.0,570.0 363.0,578.0 313.0,584.0 256.7,550.0" fill="#cdcdcd" stroke="#fff" stroke-width="0.7"/>
<polygon points="272.6,541.5 310.5,537.8 360.6,568.4 317.8,573.3" fill="#d6d6d6" stroke="#fff" stroke-width="0.6"/>
<polyline points="264.0,545.0 316.0,577.0 362.0,572.0" fill="none" stroke="#fff" stroke-width="0.7"/>
<polyline points="258.5,548.5 314.0,581.0 363.0,575.5" fill="none" stroke="#fff" stroke-width="0.7"/>
<polyline points="236.0,508.0 262.0,521.0" fill="none" stroke="#fff" stroke-width="0.9"/>
<polyline points="262.0,517.0 302.0,536.0" fill="none" stroke="#fff" stroke-width="0.9"/>
<polyline points="236.0,512.5 262.0,525.5" fill="none" stroke="#fff" stroke-width="0.9"/>
<polyline points="262.0,521.5 302.0,540.5" fill="none" stroke="#fff" stroke-width="0.9"/>
<polyline points="236.0,517.0 262.0,530.0" fill="none" stroke="#fff" stroke-width="0.9"/>
<polyline points="262.0,526.0 302.0,545.0" fill="none" stroke="#fff" stroke-width="0.9"/>
<polyline points="236.0,521.5 262.0,534.5" fill="none" stroke="#fff" stroke-width="0.9"/>
<polyline points="262.0,530.5 302.0,549.5" fill="none" stroke="#fff" stroke-width="0.9"/>
<polyline points="236.0,526.0 262.0,539.0" fill="none" stroke="#fff" stroke-width="0.9"/>
<polyline points="262.0,535.0 302.0,554.0" fill="none" stroke="#fff" stroke-width="0.9"/>
<polyline points="236.0,508.0 236.0,527.0" fill="none" stroke="#fff" stroke-width="0.9"/>
<polyline points="241.0,510.5 241.0,529.5" fill="none" stroke="#fff" stroke-width="0.9"/>
<polyline points="246.0,513.0 246.0,532.0" fill="none" stroke="#fff" stroke-width="0.9"/>
<polyline points="251.0,515.5 251.0,534.5" fill="none" stroke="#fff" stroke-width="0.9"/>
<polyline points="256.0,518.0 256.0,537.0" fill="none" stroke="#fff" stroke-width="0.9"/>
<polyline points="261.0,520.5 261.0,539.5" fill="none" stroke="#fff" stroke-width="0.9"/>
<polyline points="262.0,517.0 262.0,536.0" fill="none" stroke="#fff" stroke-width="0.9"/>
<polyline points="267.0,519.4 267.0,538.4" fill="none" stroke="#fff" stroke-width="0.9"/>
<polyline points="272.0,521.8 272.0,540.8" fill="none" stroke="#fff" stroke-width="0.9"/>
<polyline points="277.0,524.1 277.0,543.1" fill="none" stroke="#fff" stroke-width="0.9"/>
<polyline points="282.0,526.5 282.0,545.5" fill="none" stroke="#fff" stroke-width="0.9"/>
<polyline points="287.0,528.9 287.0,547.9" fill="none" stroke="#fff" stroke-width="0.9"/>
<polyline points="292.0,531.2 292.0,550.2" fill="none" stroke="#fff" stroke-width="0.9"/>
<polyline points="297.0,533.6 297.0,552.6" fill="none" stroke="#fff" stroke-width="0.9"/>
<polyline points="302.0,536.0 302.0,555.0" fill="none" stroke="#fff" stroke-width="0.9"/>
<polygon points="851.0,553.0 873.0,553.0 896.0,572.0 853.0,576.0" fill="#d0d0d0" stroke="#eee" stroke-width="0.6"/>
<polyline points="208.0,238.0 261.4,269.0 560.0,241.4 739.2,225.7 1269.0,176.0" fill="none" stroke="#1c3fb0" stroke-width="1.1"/>
<polyline points="260.5,269.0 260.5,721.0" fill="none" stroke="#1c3fb0" stroke-width="1.1"/>
<polyline points="739.2,141.0 739.2,587.0" fill="none" stroke="#1c3fb0" stroke-width="1.1"/>
<polyline points="208.0,622.0 560.0,587.5 739.2,571.0" fill="none" stroke="#1c3fb0" stroke-width="1.1"/>
<polyline points="739.2,571.0 972.0,720.0" fill="none" stroke="#1c3fb0" stroke-width="1.1"/>
<polyline points="1228.0,141.0 1257.0,158.0" fill="none" stroke="#1c3fb0" stroke-width="1.1"/>
<polygon points="225.0,243.0 232.0,246.0 226.0,249.0" fill="#1c3fb0"/>
<polygon points="219.0,244.0 225.0,248.0 219.0,251.0" fill="#1c3fb0"/>
<polygon points="766.0,588.0 774.0,590.0 769.0,596.0" fill="#1c3fb0"/>
<polygon points="772.0,594.0 781.0,597.0 774.0,600.0" fill="#1c3fb0"/>
<polygon points="1003.0,373.0 1008.0,370.5 1008.0,375.5" fill="#1c3fb0"/>
<polygon points="1016.0,373.0 1011.0,370.5 1011.0,375.5" fill="#1c3fb0"/>
<g shape-rendering="geometricPrecision">
<ellipse cx="1183" cy="265.6" rx="47.5" ry="14" fill="none" stroke="#5e5e5e" stroke-width="8"/>
<polygon points="1159.4,219.0 1178.6,226.0 1178.6,266.0 1159.4,251.0" fill="#6c6c6c"/>
<polygon points="1178.6,226.0 1209.4,222.6 1209.4,259.0 1178.6,266.0" fill="#7a7a7a"/>
<polygon points="1159.4,219.0 1191.6,216.0 1209.4,222.6 1178.6,226.0" fill="#858585"/>
<polygon points="1183.0,233.0 1205.0,230.5 1205.0,255.0 1183.0,259.5" fill="#828282"/>
<text x="0" y="0" font-family="Liberation Sans,Noto Sans CJK SC,sans-serif" font-size="21" fill="#5e5e5e" transform="matrix(1,-0.11,0,1,1184,256)">左</text>
<text x="0" y="0" font-family="Liberation Sans,Noto Sans CJK SC,sans-serif" font-size="17" fill="#858585" transform="matrix(0.6,0.22,0,1,1164,250)">后</text>
<text x="1129" y="270" font-family="Liberation Sans,Noto Sans CJK SC,sans-serif" font-size="7" fill="#b8b8b8" transform="rotate(-20 1129 270)">东</text>
<text x="1196" y="282" font-family="Liberation Sans,Noto Sans CJK SC,sans-serif" font-size="7" fill="#b8b8b8" transform="rotate(-12 1196 282)">南</text>
<text x="1222" y="259" font-family="Liberation Sans,Noto Sans CJK SC,sans-serif" font-size="6" fill="#a8a8a8" transform="rotate(15 1222 259)">西</text>
<rect x="1227" y="307.5" width="27.5" height="100.5" rx="4" fill="#4b4b4b"/>
<line x1="1229" y1="357.5" x2="1252" y2="357.5" stroke="#3a3a3a" stroke-width="1"/>
<circle cx="1241" cy="333.5" r="8" fill="#8a8a8a" stroke="#c4c4c4" stroke-width="1.5"/><circle cx="1241" cy="333" r="4.2" fill="#5a5a5a" stroke="#d8d8d8" stroke-width="1"/>
<rect x="1235" y="365" width="8" height="8" fill="#5a9a4a"/><circle cx="1243.5" cy="373.5" r="2.2" fill="#d8d8d8"/>
<polyline points="1248.0,310.5 1251.5,314.0" fill="none" stroke="#bbb" stroke-width="0.9"/>
<polyline points="1251.5,310.5 1248.0,314.0" fill="none" stroke="#bbb" stroke-width="0.9"/>
<polyline points="1247.5,400.0 1252.0,400.0" fill="none" stroke="#bbb" stroke-width="0.9"/>
<polygon points="1247.5,402.0 1252.0,402.0 1249.7,405.0" fill="#bbb"/>
</g>
<rect x="1212" y="154" width="9.5" height="3" fill="#fff"/>
<rect x="1228.5" y="152" width="6.5" height="6" fill="none" stroke="#fff" stroke-width="1.6"/><path d="M1231 152 V149.800 H1237.500 V156 H1235.500" fill="none" stroke="#fff" stroke-width="1.3"/>
<polyline points="1244.5,151.0 1252.0,158.5" fill="none" stroke="#fff" stroke-width="2.2"/>
<polyline points="1252.0,151.0 1244.5,158.5" fill="none" stroke="#fff" stroke-width="2.2"/>
<rect x="1256.5" y="141" width="13" height="580" fill="#f0f0f0"/>
<rect x="1257.5" y="424" width="11" height="13" fill="#e0e0e0" stroke="#a8a8a8" stroke-width="1"/>
<polygon points="1260.5,152.0 1266.5,152.0 1263.5,148.5" fill="#444"/>
<polygon points="1260.5,711.0 1266.5,711.0 1263.5,714.5" fill="#444"/>
</svg>
</div>
<div id="title" class="abs"></div>
<div id="titletext" class="abs"><span>技师学院机电培训中心_张洋.rvt - 三维视图: {三维 - 张洋}</span></div>
<div id="tabs" class="abs"></div>
<div id="ribbon" class="abs"></div>
<div id="panels" class="abs"></div>
<div id="plabels" class="abs"></div>
<!-- title bar items -->
<div class="abs" style="left:0;top:0;width:31px;height:30px;background:linear-gradient(#d8d8d8,#bdbdbd 50%,#8e8e8e);border-right:1px solid #555;border-bottom:1px solid #444;box-sizing:border-box;"></div>
<svg class="abs" style="left:0;top:0" width="32" height="31" viewBox="0 0 32 31">
<path d="M2 0 L9 0 L17 4 L15 9 L11 9 L19 20 L14 21 L8 12 L7 20 L1 19 Z" fill="#1747d8"/>
<path d="M9 0 L17 4 L15 9 L11 9 L12 4 Z" fill="#0b2fa8"/>
<path d="M23 10 L29 10 L26 14 Z" fill="#333"/>
</svg>
<svg class="abs" style="left:36px;top:0" width="400" height="15" viewBox="36 0 400 15">
<g fill="none" stroke="#3c3c3c" stroke-width="1.3">
<path d="M41 9 L41 1 L47 1 L48 3 L53 3 L53 5 M41 9 L44 4 L55 4 L52 9 Z" fill="#d8d8d8"/>
<rect x="63" y="-1" width="11" height="10" fill="#555"/><rect x="65.5" y="-1" width="6" height="3" fill="#eee" stroke="none"/><rect x="65" y="5" width="7" height="4" fill="#ddd" stroke="none"/>
<path d="M83 2 L88 -1 L93 2 L93 8 L88 10 L83 8 Z" fill="#e8e8e8" stroke="#777"/>
<circle cx="92" cy="8" r="3" fill="#22b030" stroke="none"/>
<path d="M116 5 L121 1 L121 3.5 C126 3.5 128 6 126 10 C126 7 124 6.5 121 6.5 L121 9 Z" fill="#e8e8e8"/>
<path d="M158 5 L153 1 L153 3.5 C148 3.5 146 6 148 10 C148 7 150 6.5 153 6.5 L153 9 Z" fill="#e0e0e0" stroke="#999"/>
<path d="M184 3 L197 3 M184 1 L184 5 M197 1 L197 5" stroke="#888"/><rect x="184" y="7" width="13" height="3" fill="#ccc" stroke="#999" stroke-width="0.6"/>
<path d="M218 10 L229 0 M218 10 L218 6.5 M218 10 L221.5 10 M229 0 L229 3.5 M229 0 L225.5 0" stroke="#333"/>
<path d="M240 8 L240 12 L244 8" stroke="#555"/><circle cx="245" cy="4" r="3.6" fill="#eee" stroke="#555"/>
<path d="M286 3 L292.500 -1.500 L299 3 L299 9.500 L286 9.500 Z" fill="#ddd" stroke="#555"/><rect x="290.500" y="4" width="4" height="5.500" fill="#888" stroke="none"/>
<path d="M324 0 L329 4.5 L324 9 L319 4.5 Z" fill="#e0e0e0" stroke="#999"/>
<path d="M342 2 L347 2 M342 5.5 L347 5.5 M342 9 L347 9 M349 2 L357 2 M349 9 L357 9" stroke="#333" stroke-width="1.6"/><path d="M355 -1 L348 10" stroke="#2a78d0" stroke-width="1.6"/>
<rect x="369" y="0" width="9" height="8" fill="#eee" stroke="#555"/><rect x="371" y="-2" width="9" height="4" fill="#ddd" stroke="#555"/>
<path d="M375 5 L381 11 M381 5 L375 11" stroke="#e02020" stroke-width="2"/>
<rect x="390" y="1" width="10" height="9" fill="#eee" stroke="#555"/><rect x="393" y="-2" width="8" height="5" fill="#f4f4f4" stroke="#555"/>
<path d="M420 1 L427 1" stroke="#444" stroke-width="1.2"/>
</g>
<g fill="#333">
<path d="M102 3.5 L107 3.5 L104.5 6.5 Z"/><path d="M134 3.5 L139 3.5 L136.5 6.5 Z"/><path d="M166 3.5 L171 3.5 L168.5 6.5 Z" fill="#666"/>
<path d="M204 3.5 L209 3.5 L206.5 6.5 Z"/><path d="M306 3.5 L311 3.5 L308.5 6.5 Z"/><path d="M407 3.5 L412 3.5 L409.5 6.5 Z"/><path d="M420.500 4 L426.500 4 L423.500 7.500 Z"/>
</g>
<text x="259.500" y="10.500" font-family="Liberation Sans,sans-serif" font-size="16" font-weight="bold" fill="#333">A</text>
<line x1="178" y1="0" x2="178" y2="12" stroke="#bbb"/><line x1="361" y1="0" x2="361" y2="12" stroke="#bbb"/>
</svg>
<!-- search & right icons -->
<svg class="abs" style="left:740px;top:0" width="529" height="15" viewBox="740 0 529 15">
<path d="M742 1 L746 5 L742 9 Z" fill="#333"/>
<rect x="750.5" y="-1" width="158" height="14.5" fill="#fff" stroke="#555"/>
<text x="754" y="9.5" font-family="Liberation Sans,Noto Sans CJK SC,sans-serif" font-size="9.5" font-style="italic" fill="#8a8a8a">键入关键字或短语</text>
<g fill="none" stroke="#333" stroke-width="1.3">
<rect x="914" y="2" width="5" height="9" rx="1.5"/><rect x="922" y="2" width="5" height="9" rx="1.5"/><path d="M916 2 L916 -1 M925 2 L925 -1 M919 5 L922 5"/>
<path d="M937 -1 C940 -1 943 2 942 5 L948 11 L946 12 L940 6 C937 6 935 3 936 0" fill="#e8e8e8"/>
<path d="M958 1 L966 9 C962 11 958 9 957 5 Z M966 0 L962 5 M960 9 L958 12 L967 12" fill="#eee"/>
<path d="M985 -1 L987 4 L992 4 L988 7.5 L989.5 12 L985 9 L980.5 12 L982 7.5 L978 4 L983 4 Z" fill="#f4f4f4"/>
<path d="M1002 -1 C1002 4 1004 6 1006 6 C1008 6 1010 4 1010 -1 M1000 12 C1000 8 1003 8 1004 6 M1012 12 C1012 8 1009 8 1008 6 M1000 12 L1012 12" fill="#eee"/>
</g>
<text x="1017" y="9" font-family="Liberation Sans,Noto Sans CJK SC,sans-serif" font-size="11" fill="#111">登录</text>
<path d="M1092 4 L1097 4 L1094.5 7 Z" fill="#333"/>
<path d="M1106 -1 L1110 -1 L1118 10 L1114 10 Z M1118 -1 L1114 -1 L1106 10 L1110 10 Z" fill="#2244a8"/>
<line x1="1127" y1="0" x2="1127" y2="13" stroke="#aaa"/>
<circle cx="1142" cy="5" r="6.5" fill="#f4f6ff" stroke="#2a3c9c" stroke-width="1.3"/>
<text x="1139" y="9.5" font-family="Liberation Sans,sans-serif" font-size="11" font-weight="bold" fill="#2a3c9c">?</text>
<path d="M1156 4 L1161 4 L1158.5 7 Z" fill="#333"/>
<rect x="1165" y="-2" width="104" height="17" fill="#2c2c30"/>
<rect x="1179" y="-3" width="26" height="13" rx="3" fill="#5a5a60" stroke="#c8c8c8" stroke-width="1"/>
<rect x="1205" y="-3" width="24" height="13" fill="#5a5a60" stroke="#c8c8c8" stroke-width="1"/>
<rect x="1229" y="-3" width="42" height="13" rx="3" fill="#c83020" stroke="#e8c8c0" stroke-width="1"/>
<rect x="1187" y="2" width="10" height="3.5" fill="#fff"/>
<rect x="1211" y="-2" width="8" height="7" fill="none" stroke="#fff" stroke-width="2"/>
<path d="M1245 -2 L1254 6 M1254 -2 L1245 6" stroke="#fff" stroke-width="2.4"/>
</svg>
<!-- tabs -->
<span class="tab" style="left:44px">建筑</span><span class="tab" style="left:83px">结构</span><span class="tab" style="left:122px">系统</span>
<span class="tab" style="left:161px">插入</span><span class="tab" style="left:200px">注释</span><span class="tab" style="left:239px">分析</span>
<span class="tab" style="left:278px">体量和场地</span><span class="tab" style="left:349px">协作</span><span class="tab" style="left:388px">视图</span>
<span class="tab" style="left:427px">管理</span><span class="tab" style="left:466px">附加模块</span>
<div class="abs" style="left:519px;top:17px;width:79px;height:17px;background:linear-gradient(#e6f3de,#cfe6c3);border:1px solid #84c35a;border-bottom:none;box-sizing:border-box;"></div>
<span class="tab" style="left:528px;color:#111">修改 | 剖面框</span>
<svg class="abs" style="left:615px;top:18px" width="32" height="14" viewBox="0 0 32 14"><rect x="3.5" y="3.5" width="13" height="7" rx="2" fill="#f4f4f4" stroke="#333"/><path d="M7.5 8.5 L12.5 8.5 L10 5.5 Z" fill="#333"/><path d="M20 6 L25 6 L22.5 9 Z" fill="#222"/></svg>
<!-- panel separators & labels -->
<div class="psep" style="left:40px"></div><div class="psep" style="left:80px"></div><div class="psep" style="left:147px"></div><div class="psep" style="left:299px"></div><div class="psep" style="left:510px"></div><div class="psep" style="left:568px"></div><div class="psep" style="left:618px"></div>
<span class="plab" style="left:2px">选择</span><svg class="abs" style="left:28px;top:106px" width="8" height="6"><path d="M0 0 L7 0 L3.5 4 Z" fill="#333"/></svg>
<span class="plab" style="left:49px">属性</span><span class="plab" style="left:97px">剪贴板</span><span class="plab" style="left:201px">几何图形</span><span class="plab" style="left:394px">修改</span><span class="plab" style="left:528px">视图</span><span class="plab" style="left:581px">测量</span><span class="plab" style="left:644px">创建</span>
<!-- modify big button -->
<div class="abs" style="left:2px;top:36px;width:33px;height:63px;background:#c0dbf5;border:1px solid #4f97e0;box-sizing:border-box;"></div>
<svg class="abs" style="left:11px;top:43px" width="15" height="18.500" viewBox="0 0 18 22"><path d="M3 1 L3 17 L7 13 L10 20 L12.5 19 L9.5 12.5 L14.5 12.5 Z" fill="#fff" stroke="#333" stroke-width="1.2"/></svg>
<span class="rt" style="left:8px;top:70px;color:#333">修改</span>
<!-- properties panel icons -->
<svg class="abs" style="left:44px;top:36px" width="34" height="64" viewBox="44 36 34 64">
<g fill="#f2f2f2" stroke="#cfcfcf"><rect x="48.500" y="39.500" width="9" height="9"/><rect x="58.500" y="39.500" width="9" height="9"/><rect x="48.500" y="50.500" width="9" height="9"/><rect x="60.500" y="47.500" width="12" height="17" fill="#fafafa"/><path d="M63 53 H70 M63 56 H70 M63 59 H70"/></g>
<rect x="43.500" y="69.500" width="33" height="30" fill="#b4d3f3" stroke="#4f97e0"/>
<rect x="50.500" y="71.500" width="19" height="26" fill="#fff" stroke="#333" stroke-width="1.2"/><rect x="53" y="74" width="9" height="9" fill="#2a5aa0"/><rect x="62" y="74" width="5" height="9" fill="#9ab"/>
<path d="M53 87 H67 M53 92 H67" stroke="#333" stroke-width="1.4"/><path d="M56 85 V89 M63 90 V94" stroke="#333" stroke-width="1.6"/>
</svg>
<!-- clipboard -->
<svg class="abs" style="left:84px;top:36px" width="62" height="64" viewBox="84 36 62 64">
<g fill="#f2f2f2" stroke="#c8c8c8"><rect x="92.500" y="42.500" width="17" height="21" rx="2"/><rect x="97" y="39.500" width="8" height="5" rx="1"/><path d="M100.500 48.500 H110 L115.500 54 V66.500 H100.500 Z" fill="#fafafa"/></g>
<path d="M101 86.500 L106 86.500 L103.500 89.500 Z" fill="#666"/>
<path d="M129 41 L141 53 M141 41 L129 53" stroke="#cfcfcf" stroke-width="2"/>
<path d="M128.500 60.500 H135 L138 63.500 V72.500 H128.500 Z M132.500 64.500 H139 L142 67.500 V76.500 H132.500 Z" fill="#fff" stroke="#444"/>
<rect x="128.500" y="82.500" width="8" height="9" fill="#fff" stroke="#444"/><rect x="130" y="84" width="3" height="3" fill="#3070c0"/>
<path d="M141 82 L135 93 L131 97 L138 95 L143 84 Z" fill="#555"/><path d="M141 82 L143 84 L140 88 L138.500 86.500 Z" fill="#e09020"/>
</svg>
<span class="rt" style="left:92px;top:70px;color:#a8a8a8">粘贴</span>
<!-- geometry panel -->
<svg class="abs" style="left:150px;top:36px" width="148" height="64" viewBox="150 36 148 64">
<path d="M155.500 41.500 H161 M155.500 52.500 H161 M158 41.500 V52.500 M168 42 L161.500 47 L168 52 M161.500 47 H169" fill="none" stroke="#333" stroke-width="1.3"/>
<rect x="159.500" y="61.500" width="9" height="9" fill="#9cc8f0" stroke="#3878c0"/><circle cx="158.500" cy="70" r="4.500" fill="#fff" stroke="#555"/><path d="M155 67 A4.500 4.500 0 0 1 162 67" fill="none" stroke="#d03020"/>
<rect x="159.500" y="82.500" width="9" height="9" fill="#9cc8f0" stroke="#3878c0"/><circle cx="158.500" cy="91.500" r="4.500" fill="#9cc8f0" stroke="#3878c0"/>
<g fill="#333"><path d="M232.500 46 L237.500 46 L235 49 Z"/><path d="M200.500 67 L205.500 67 L203 70 Z"/><path d="M200.500 88 L205.500 88 L203 91 Z"/><path d="M287.500 67 L292.500 67 L290 70 Z"/></g>
<path d="M246.500 41.500 H254 L257 44.500 V53.500 H246.500 Z" fill="#f4f4f4" stroke="#cfcfcf"/><path d="M259 47.500 H253 M255.500 45 L253 47.500 L255.500 50" stroke="#cfcfcf" fill="none"/>
<path d="M268.500 42.500 L274 40.500 L281.500 43.500 V52 L275 54.500 L268.500 51 Z" fill="#cfe0f4" stroke="#2a5ca8" stroke-width="1.300"/><rect x="271.500" y="45.500" width="6" height="5" fill="#6aa2e4" stroke="#1a4a90" stroke-width="0.8"/>
<path d="M247 62.500 H259 M247 66 H259" stroke="#333" stroke-dasharray="2 1"/><rect x="246.500" y="69.500" width="13" height="4" fill="#b8c8d8" stroke="#557"/><path d="M249 60 V64 M247.500 62.500 L249 64.500 L250.500 62.500" stroke="#2060c0" fill="none"/>
<circle cx="272.500" cy="64" r="3.500" fill="#fff" stroke="#333"/><path d="M270.500 62 L274.500 66 M274.500 62 L270.500 66" stroke="#333" stroke-width="0.8"/><rect x="275.500" y="68.500" width="6" height="6" fill="#e8e8e8" stroke="#555"/><path d="M270 70 V74 H273" fill="none" stroke="#333"/>
<path d="M247.500 83 V96.500 H260" fill="none" stroke="#2060c0" stroke-width="1.4"/><rect x="250" y="91" width="10" height="4" fill="#b8c8d8"/><path d="M251 90 L258 82 L260 84 L253 92 Z" fill="#e8a020" stroke="#664"/>
<path d="M269 86 L275 82 L279 86 L273 90 Z" fill="#555" stroke="#222"/><path d="M275.500 88 L282 96" stroke="#b06030" stroke-width="2.4"/>
</svg>
<span class="rt" style="left:173px;top:41px">连接端切割</span><span class="rt" style="left:173px;top:62px">剪切</span><span class="rt" style="left:173px;top:83px">连接</span>
<!-- modify panel -->
<svg class="abs" style="left:300px;top:36px" width="210" height="64" viewBox="300 36 210 64">
<path d="M306.500 38 V66" stroke="#222" stroke-width="1.4"/><rect x="308.500" y="41.500" width="9" height="8" fill="#9cc8f0" stroke="#3878c0"/><rect x="308.500" y="52.500" width="22" height="11" fill="#f8f8f8" stroke="#333" stroke-width="1.3"/>
<path d="M342 60.500 H347 C350 60.500 349 52 349 48 C349 42 358 42 358 48 C358 52 357 56 360 56 H367" fill="none" stroke="#333" stroke-width="1.3"/><path d="M342 64.500 H348 C353 64.500 352 56 352 49 C352 46 355 46 355 49 C355 56 354 60 359 60 H367" fill="none" stroke="#3a80d0" stroke-width="1.6"/>
<g fill="#f2f2f2" stroke="#d0d0d0"><path d="M376.500 43 L383 40 V62 H376.500 Z"/><path d="M391 44 L397 40.500 L400 62 H391 Z"/><path d="M387.500 38 V66" stroke-dasharray="3 2"/><path d="M411.500 43 L418 40 V62 H411.500 Z"/><path d="M426 62 L434 46 L436 47.500 L428 63.500 Z"/><path d="M422.500 38 V66"/></g>
<g stroke="#3a80d0" fill="#9cc8f0"><rect x="446.500" y="44.500" width="13" height="5" rx="2"/><rect x="468.500" y="44.500" width="5" height="5" rx="1.500"/><rect x="476.500" y="44.500" width="5" height="5" rx="1.500"/></g>
<path d="M453 41 V53 M475 41 V53" stroke="#e03030" stroke-dasharray="2 1"/>
<g stroke="#d0d0d0" fill="#f2f2f2"><path d="M492 46 H497 L500 43 V51 L497 48 M500 47 H503"/><path d="M499 49 L504 54 M504 49 L499 54" stroke="#ccc" stroke-width="1.600"/>
<rect x="446.500" y="61.500" width="5" height="5"/><rect x="453.500" y="61.500" width="5" height="5"/><rect x="446.500" y="68.500" width="5" height="5"/><rect x="453.500" y="68.500" width="5" height="5"/>
<rect x="468.500" y="61.500" width="13" height="13"/><rect x="471.500" y="66.500" width="7" height="8"/>
<path d="M491 94 L503 82 M503 94 L491 82" stroke-width="2.600" stroke="#d4d4d4"/></g>
<path d="M490 68 H494 M494 64 L497 66 H501 V63 V73 V70 H497 L494 72 Z" fill="#eee" stroke="#444" stroke-width="1"/>
<path d="M319 70 L323.500 75.500 H320.500 V80.500 H325.500 V77.500 L331 82 L325.500 86.500 V83.500 H320.500 V88.500 H323.500 L319 94 L314.500 88.500 H317.500 V83.500 H312.500 V86.500 L307 82 L312.500 77.500 V80.500 H317.500 V75.500 H314.500 Z" fill="#333"/><rect x="317" y="80" width="4" height="4" fill="#fff" stroke="#333" stroke-width="0.8"/>
<circle cx="346.500" cy="74" r="4" fill="#fff" stroke="#555"/><circle cx="352.500" cy="89" r="4.500" fill="#9cc8f0" stroke="#3878c0"/><circle cx="356" cy="92" r="4.500" fill="#bcdcf8" stroke="#3878c0"/><path d="M353 73 H360 C363 73 363 76 363 79" fill="none" stroke="#333" stroke-width="1.3"/><path d="M360.500 78 L363 81.500 L365.500 78 Z" fill="#333"/>
<path d="M396.500 77 A11 11 0 1 1 386 73.500" fill="none" stroke="#444" stroke-width="2"/><path d="M384 69.500 L391 73 L385 77.500 Z" fill="#444"/>
<path d="M410 73.500 H424 M410 77.500 H421" stroke="#333" stroke-width="1.4"/><path d="M421 71 L425 73.500 L421 76" fill="none" stroke="#333"/><path d="M422 77.500 H429 V94 M426 81 V94" fill="none" stroke="#4a94e0" stroke-width="1.6"/><path d="M433.500 94 V82 M431 85 L433.500 81.500 L436 85" fill="none" stroke="#333" stroke-width="1.2"/>
<path d="M446 88 H452 M450 85.500 L453 88 L450 90.500" fill="none" stroke="#333" stroke-width="1.2"/><path d="M455.500 83 V95 M458.500 83 V95" stroke="#4a94e0" stroke-width="1.5"/><path d="M446 93 H455" stroke="#9ac"/>
<path d="M468 84 H476 M468 88 H476 M468 92 H476" stroke="#333" stroke-width="1.2"/><path d="M474 82 L477 84 L474 86" fill="none" stroke="#333"/><path d="M479 83 V95 M482 83 V95" stroke="#4a94e0" stroke-width="1.5"/>
</svg>
<!-- view / measure / create -->
<svg class="abs" style="left:511px;top:36px" width="182" height="64" viewBox="511 36 182 64">
<path d="M524 48 C519 48 518 54 521 57 C522 58 522 60 522 61 H526 C526 60 526 58 527 57 C530 54 529 48 524 48 Z" fill="#bfe0f8" stroke="#3878c0"/><path d="M522 62.500 H526 M522.500 64.500 H525.500" stroke="#444"/>
<g fill="#333"><path d="M535.500 56 L540.500 56 L538 59 Z"/><path d="M535.500 78 L540.500 78 L538 81 Z"/><path d="M607.500 51 L612.500 51 L610 54 Z"/><path d="M607.500 83 L612.500 83 L610 86 Z"/></g>
<path d="M549 56 L554 52 L561 54 V61 L556 64 L549 62 Z" fill="#eee" stroke="#333"/><path d="M551 63 V56 M554 63 V56 M557 63 V57" stroke="#333" stroke-width="0.8"/><path d="M560 47 L561 50 L564 50 L561.500 52 L562.500 55 L560 53 L557.500 55 L558.500 52 L556 50 L559 50 Z" fill="#f0a020" stroke="#c06010" stroke-width="0.5"/>
<path d="M530 71 L532 73 L524 83 L521 81 Z" fill="#e09030" stroke="#804010" stroke-width="0.6"/><path d="M523 81 L525.500 83.500 C523 87 519 88 516 87 C519 85 520 83 523 81 Z" fill="#444"/>
<path d="M548 73 H563 M548 76.500 H563" stroke="#222" stroke-width="1.3"/><path d="M548 80 H563" stroke="#222" stroke-dasharray="2 1.500"/><path d="M556 82 H560 V85 H562.500 L558 89.500 L553.500 85 H556 Z" fill="#2a78d8"/>
<path d="M576 47.500 H601 M579 45 L575.500 47.500 L579 50 M598 45 L601.500 47.500 L598 50" fill="none" stroke="#cfcfcf" stroke-width="1.3"/><rect x="575.500" y="54.500" width="26" height="5" fill="#e8e8e8" stroke="#d0d0d0"/>
<path d="M577 93 L599 74 M574 88 L581 97 M596 70 L603 79" stroke="#333" stroke-width="1.4"/><path d="M577 93 L579 88 L582 91.500 Z M599 74 L594 75.500 L597 79 Z" fill="#333"/>
<g fill="#f2f2f2" stroke="#d0d0d0"><path d="M627 42.500 H624.500 V64.500 H627 M648 42.500 H650.500 V64.500 H648"/><rect x="631.500" y="44.500" width="8" height="9"/><rect x="629.500" y="53.500" width="9" height="9"/><rect x="638.500" y="53.500" width="9" height="9"/>
<path d="M661 42.500 H658.500 V64.500 H661 M681 42.500 H683.500 V64.500 H681"/><circle cx="667" cy="51" r="5.500"/><rect x="668.500" y="52.500" width="10" height="9"/><circle cx="680" cy="44" r="3" stroke-dasharray="1.500 1"/>
<path d="M624.500 78 L633 73 L652 78 V90 L645 97 L624.500 90 Z"/><path d="M628 76 L647 81 V93 M632 74 L650 79"/>
<rect x="657.500" y="71.500" width="6" height="6"/><rect x="677.500" y="71.500" width="6" height="6"/><rect x="657.500" y="90.500" width="10" height="7"/><path d="M677 89 L681.500 85 L686 89 L681.500 93 Z"/></g>
<path d="M665 74.500 H675 M673 72.500 L675.500 74.500 L673 76.500 M660.500 79 V87 M658.500 85 L660.500 87.500 L662.500 85 M667 80 L673 85 M673 82 V85.500 H670" fill="none" stroke="#c4c4c4" stroke-width="1.1"/>
</svg>
<!-- green badge -->
<div class="abs" style="left:1256px;top:39px;width:38px;height:38px;border-radius:19px;background:radial-gradient(circle at 40% 35%,#7be07a,#2fb046 60%,#1d8a34);border:2px solid #e8f0e4;box-sizing:border-box;"></div>
<span class="abs" style="left:1262px;top:51px;font-size:9px;font-weight:bold;color:#fff">4(</span>

<div id="optbar" class="abs"><span>修改 | 剖面框</span></div>
<div id="props" class="abs">
<div class="abs" style="left:3px;top:3px;width:205px;height:18px;background:#c5d4e6;"></div>
<span class="abs" style="left:5px;top:5px;font-size:11px;color:#111;line-height:14px">属性</span>
<svg class="abs" style="left:194px;top:8px" width="9" height="9"><path d="M1 1 L7.500 7.500 M7.500 1 L1 7.500" stroke="#111" stroke-width="1.6"/></svg>
<div class="abs" style="left:0;top:0;width:3px;height:575px;background:#f0f0f0;"></div>
<div class="abs" style="left:205px;top:21px;width:3px;height:552px;background:#f0f0f0;"></div>
<div class="abs" style="left:6px;top:25px;width:196px;height:64px;background:linear-gradient(#fff,#ececec);border:1px solid #c9c9c9;box-sizing:border-box;"></div>
<div class="abs" style="left:10px;top:28px;width:58px;height:58px;background:linear-gradient(#f0f0f0,#dcdcdc);"></div>
<svg class="abs" style="left:10px;top:28px" width="58" height="58" viewBox="0 0 58 58"><path d="M23 12 L29 5 L38 16 L35 26 L31 26 L44 38 L38 42 L26 30 L24 42 L14 38 Z" fill="#c9c9c9"/><path d="M29 5 L38 16 L35 26 L31 26 L32 16 Z" fill="#bbb"/></svg>
<svg class="abs" style="left:192px;top:58px" width="8" height="6"><path d="M0 0 L7 0 L3.500 4 Z" fill="#999"/></svg>
<div class="abs" style="left:7px;top:91px;width:122px;height:21px;background:linear-gradient(#f8f8f8,#e4e4e4);border:1px solid #707070;border-radius:3px;box-sizing:border-box;"></div>
<span class="abs" style="left:10px;top:95px;font-size:11px;color:#111;line-height:14px">剖面框 (1)</span>
<svg class="abs" style="left:117px;top:99px" width="8" height="6"><path d="M0 0 L7 0 L3.500 4 Z" fill="#111"/></svg>
<svg class="abs" style="left:133px;top:93px" width="16" height="16" viewBox="0 0 16 16"><g fill="none" stroke="#aaa"><rect x="1.500" y="1.500" width="5" height="5"/><rect x="1.500" y="8.500" width="5" height="5"/><rect x="8.500" y="3.500" width="6" height="10"/><path d="M10 7 H13 M10 10 H13"/></g></svg>
<span class="abs" style="left:152px;top:95px;font-size:11px;color:#a9a9a9;line-height:14px">编辑类型</span>
<div class="abs" style="left:6px;top:113px;width:197px;height:17px;background:#dedede;"></div>
<span class="abs" style="left:8px;top:115px;font-size:11px;color:#111;line-height:14px">标识数据</span>
<svg class="abs" style="left:190px;top:117px" width="8" height="10"><path d="M1 4 L4 1 L7 4 M1 8 L4 5 L7 8" fill="none" stroke="#111" stroke-width="1.2"/></svg>
<div class="abs" style="left:6px;top:130px;width:197px;height:35px;border-bottom:1px dotted #777;"></div>
<div class="abs" style="left:6px;top:147px;width:197px;height:0;border-top:1px dotted #777;"></div>
<div class="abs" style="left:104px;top:130px;width:0;height:35px;border-left:1px dotted #777;"></div>
<div class="abs" style="left:202px;top:130px;width:0;height:35px;border-left:1px dotted #777;"></div>
<span class="abs" style="left:15px;top:132px;font-size:11px;color:#888;line-height:14px">工作集</span>
<span class="abs" style="left:107px;top:132px;font-size:11px;color:#888;line-height:14px">视图 "三维视...</span>
<span class="abs" style="left:15px;top:149px;font-size:11px;color:#888;line-height:14px">编辑者</span>
<span class="abs" style="left:107px;top:149px;font-size:11px;color:#888;line-height:14px">张洋</span>
<div class="abs" style="left:6px;top:25px;width:0;height:505px;border-left:1px solid #b0b0b0;"></div>
<div class="abs" style="left:202px;top:165px;width:0;height:365px;border-left:1px solid #d8d8d8;"></div>
<span class="abs" style="left:9px;top:531px;font-size:11px;color:#1a5ad0;text-decoration:underline;line-height:14px">属性帮助</span>
<div class="abs" style="left:136px;top:529px;width:64px;height:18px;border:1px solid #c4c4c4;border-radius:3px;background:#f8f8f8;box-sizing:border-box;text-align:center;font-size:11px;color:#a8a8a8;line-height:16px">应用</div>
<div class="abs" style="left:0;top:549px;width:208px;height:26px;background:#f0f0f0;"></div>
<div class="abs" style="left:4px;top:549px;width:34px;height:21px;background:#fff;"></div>
<span class="abs" style="left:9px;top:553px;font-size:11px;color:#111;line-height:14px">属性</span>
<div class="abs" style="left:38px;top:551px;width:167px;height:20px;border:1px solid #8a8a8a;border-radius:3px;background:#f4f4f4;box-sizing:border-box;"></div>
<span class="abs" style="left:44px;top:554px;font-size:11px;color:#111;line-height:14px;white-space:nowrap;letter-spacing:-0.35px">项目浏览器 - 技师学院机电培训...</span>

</div>
<div id="status" class="abs">
<span class="abs" style="left:15px;top:0px;font-size:11px;color:#111;line-height:14px;white-space:pre">1  :  100</span>
<svg class="abs" style="left:64px;top:-2px" width="280" height="18" viewBox="64 718 280 18">
<rect x="67.500" y="721.500" width="13" height="10" rx="1" fill="#888" stroke="#333"/><path d="M69 724 H80 M69 727 H80 M69 730 H80" stroke="#ddd" stroke-dasharray="1.500 1.500"/>
<path d="M87.500 724.500 L90.500 721.500 H100.500 L97.500 724.500 Z M87.500 724.500 H97.500 V732.500 H87.500 Z M97.500 724.500 L100.500 721.500 V729.500 L97.500 732.500" fill="#cfe2f8" stroke="#2a5aa8"/>
<circle cx="109" cy="725" r="3.500" fill="#f8c830" stroke="#c08010"/><path d="M109 719.500 V721 M104 725 H102.500 M105 721 L104 720 M113 721 L114 720" stroke="#c08010"/><path d="M111 727 L116.500 732.500 M116.500 727 L111 732.500" stroke="#e02020" stroke-width="1.800"/>
<circle cx="129" cy="725" r="3.500" fill="#cfe2f8" stroke="#2a5aa8"/><path d="M124 731.500 H134" stroke="#2a5aa8"/><path d="M131 727 L136.500 732.500 M136.500 727 L131 732.500" stroke="#e02020" stroke-width="1.800"/>
<path d="M144 724 L149 721.500 L154 724 V729 L149 731.500 L144 729 Z" fill="#eee" stroke="#666"/><circle cx="153" cy="728" r="2.500" fill="#bfe0f8" stroke="#2a5aa8"/><path d="M153 731 V733" stroke="#444"/>
<path d="M162 723.500 H172 V731.500 H162 Z M160 727.500 H174" fill="none" stroke="#555" stroke-dasharray="2 1"/><path d="M167 725 L172.500 730.500 M172.500 725 L167 730.500" stroke="#e02020" stroke-width="1.800"/>
<path d="M181 723.500 H191 V731.500 H181 Z M179 727.500 H193" fill="none" stroke="#555" stroke-dasharray="2 1"/><circle cx="190" cy="727" r="2.500" fill="#bfe0f8" stroke="#2a5aa8"/><path d="M190 730 V732.500" stroke="#444"/>
<path d="M198.500 726 L204 721 L209.500 726 V732.500 H198.500 Z" fill="#f4f4f4" stroke="#444"/><rect x="204.500" y="727.500" width="5" height="5" fill="#dfe" stroke="#284"/>
<path d="M218 726 C220 722 224 722 226 726 C228 730 232 730 233 726" fill="none" stroke="#555" stroke-width="1.400"/><circle cx="221" cy="727.500" r="2.500" fill="#e8e8e8" stroke="#555"/><circle cx="230" cy="728" r="2.500" fill="#e8e8e8" stroke="#555"/>
<circle cx="241.500" cy="725.500" r="2.500" fill="#bfe0f8" stroke="#2a5aa8"/><path d="M241.500 728.500 V731.500" stroke="#444"/>
<path d="M255 731 C252 728 254 723 258 723 C262 723 264 726 262 728" fill="none" stroke="#3a8a3a" stroke-width="1.400"/><path d="M257 726 L263.500 732.500 M263.500 726 L257 732.500" stroke="#e02020" stroke-width="1.800"/>
<rect x="273.500" y="723.500" width="10" height="8" fill="#eee" stroke="#444" stroke-dasharray="2 1"/><rect x="279.500" y="726.500" width="6" height="5" fill="#ddd" stroke="#444"/>
<path d="M290.500 725.500 H302.500 V732.500 H290.500 Z M293 725.500 V732.500 M296.500 725.500 V732.500 M300 725.500 V732.500" fill="#fbe" stroke="#a04040" stroke-width="0.900"/><circle cx="301" cy="724.500" r="2.500" fill="#bfe0f8" stroke="#2a5aa8"/>
<path d="M311.500 726.500 H318.500 V732.500 H311.500 Z M314.500 723.500 H321.500 V729.500 M311.500 726.500 L314.500 723.500 M318.500 726.500 L321.500 723.500 M318.500 732.500 L321.500 729.500" fill="#e8e8e8" stroke="#444"/>
<path d="M333.500 724 L330 727 L333.500 730 Z" fill="#333"/>
</svg>
<div class="abs" style="left:340px;top:0px;width:916px;height:16px;background:#f0f0f0;"></div>
<div class="abs" style="left:783px;top:2px;width:15px;height:11px;background:#dcdcdc;border:1px solid #b8b8b8;box-sizing:border-box;border-radius:2px"></div>
<svg class="abs" style="left:1244px;top:2px" width="8" height="10"><path d="M1.500 2 L5 5 L1.500 8 Z" fill="#333"/></svg>

</div>
</body>
</html>
